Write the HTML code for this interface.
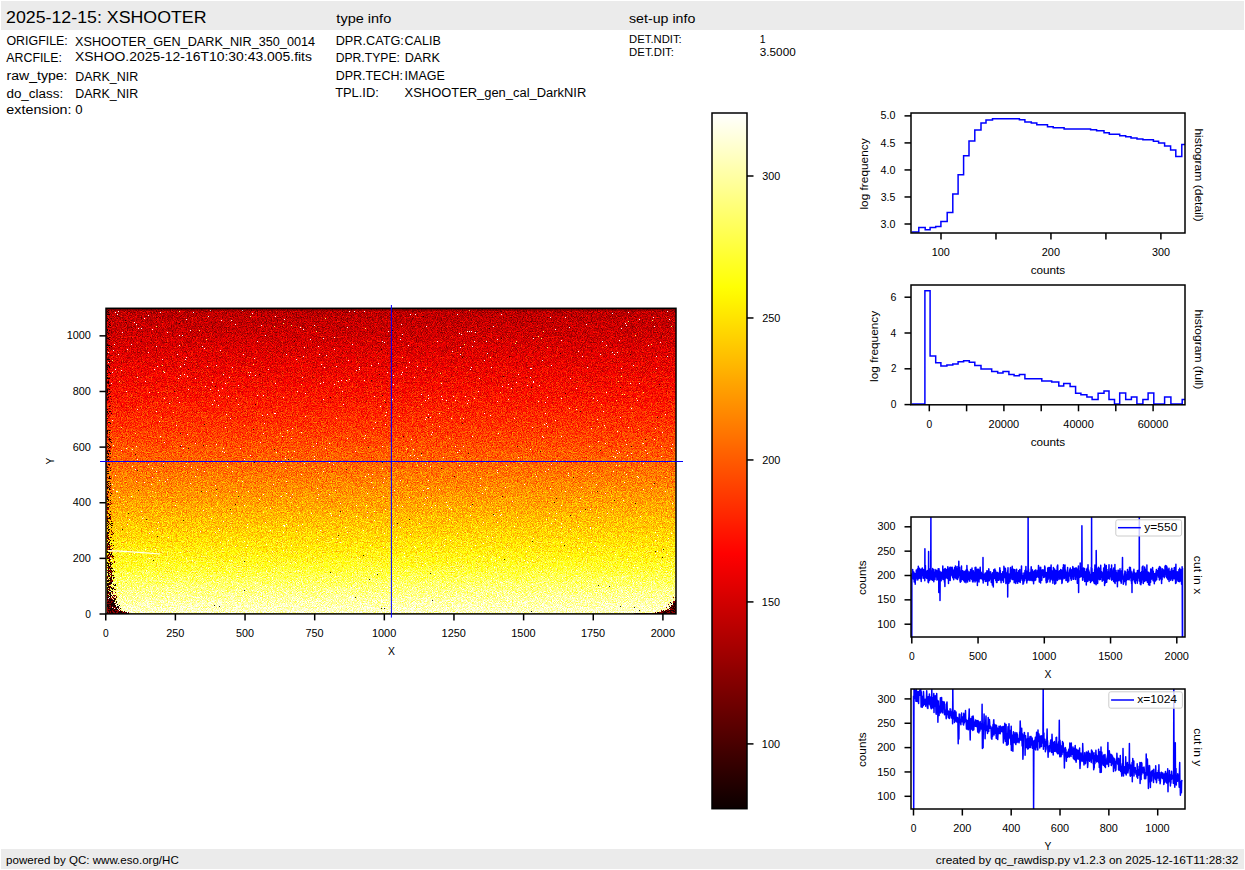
<!DOCTYPE html>
<html><head><meta charset="utf-8"><title>XSHOOTER raw display</title>
<style>html,body{margin:0;padding:0;background:#fff;width:1245px;height:870px;overflow:hidden}</style>
</head><body>
<svg width="1245" height="870" viewBox="0 0 1245 870" font-family='"Liberation Sans", sans-serif' style="display:block"><rect x="1" y="1" width="1243" height="29" fill="#ebebeb"/>
<rect x="1" y="849" width="1243" height="20" fill="#ebebeb"/>
<text x="6.01" y="23" font-size="16.67" textLength="200.52" lengthAdjust="spacingAndGlyphs" fill="#000">2025-12-15: XSHOOTER</text>
<text x="336.38" y="22.8" font-size="12.5" textLength="54.83" lengthAdjust="spacingAndGlyphs" fill="#000">type info</text>
<text x="629" y="22.6" font-size="12.5" textLength="66.29" lengthAdjust="spacingAndGlyphs" fill="#000">set-up info</text>
<text x="6.41" y="44.9" font-size="12.5" textLength="61.41" lengthAdjust="spacingAndGlyphs" fill="#000">ORIGFILE:</text>
<text x="75.09" y="45.6" font-size="12.5" textLength="240.01" lengthAdjust="spacingAndGlyphs" fill="#000">XSHOOTER_GEN_DARK_NIR_350_0014</text>
<text x="6.37" y="61.6" font-size="12.5" textLength="55.51" lengthAdjust="spacingAndGlyphs" fill="#000">ARCFILE:</text>
<text x="75.06" y="61.4" font-size="12.5" textLength="236.89" lengthAdjust="spacingAndGlyphs" fill="#000">XSHOO.2025-12-16T10:30:43.005.fits</text>
<text x="6.5" y="80.3" font-size="12.5" textLength="61.03" lengthAdjust="spacingAndGlyphs" fill="#000">raw_type:</text>
<text x="75.2" y="80.5" font-size="12.5" textLength="63.05" lengthAdjust="spacingAndGlyphs" fill="#000">DARK_NIR</text>
<text x="6.43" y="97.5" font-size="12.5" textLength="56.72" lengthAdjust="spacingAndGlyphs" fill="#000">do_class:</text>
<text x="75.2" y="97.6" font-size="12.5" textLength="63.05" lengthAdjust="spacingAndGlyphs" fill="#000">DARK_NIR</text>
<text x="6.38" y="113.6" font-size="12.5" textLength="65.13" lengthAdjust="spacingAndGlyphs" fill="#000">extension:</text>
<text x="75.31" y="113.8" font-size="12.5" textLength="7.33" lengthAdjust="spacingAndGlyphs" fill="#000">0</text>
<text x="335.7" y="44.8" font-size="12.5" textLength="68.12" lengthAdjust="spacingAndGlyphs" fill="#000">DPR.CATG:</text>
<text x="404.57" y="44.8" font-size="12.5" textLength="36.22" lengthAdjust="spacingAndGlyphs" fill="#000">CALIB</text>
<text x="335.73" y="61.5" font-size="12.5" textLength="64.16" lengthAdjust="spacingAndGlyphs" fill="#000">DPR.TYPE:</text>
<text x="404.69" y="61.5" font-size="12.5" textLength="35.28" lengthAdjust="spacingAndGlyphs" fill="#000">DARK</text>
<text x="335.7" y="80" font-size="12.5" textLength="67.17" lengthAdjust="spacingAndGlyphs" fill="#000">DPR.TECH:</text>
<text x="404.57" y="80" font-size="12.5" textLength="40.27" lengthAdjust="spacingAndGlyphs" fill="#000">IMAGE</text>
<text x="335.17" y="96.8" font-size="12.5" textLength="43.68" lengthAdjust="spacingAndGlyphs" fill="#000">TPL.ID:</text>
<text x="404.58" y="96.8" font-size="12.5" textLength="181.64" lengthAdjust="spacingAndGlyphs" fill="#000">XSHOOTER_gen_cal_DarkNIR</text>
<text x="629.14" y="42.8" font-size="10.4" textLength="52.58" lengthAdjust="spacingAndGlyphs" fill="#000">DET.NDIT:</text>
<text x="759.85" y="42.8" font-size="10.4" textLength="5.82" lengthAdjust="spacingAndGlyphs" fill="#000">1</text>
<text x="629.14" y="55.7" font-size="10.4" textLength="44.8" lengthAdjust="spacingAndGlyphs" fill="#000">DET.DIT:</text>
<text x="759.85" y="55.7" font-size="10.4" textLength="35.81" lengthAdjust="spacingAndGlyphs" fill="#000">3.5000</text>
<text x="6.06" y="863.8" font-size="10.4" textLength="172.68" lengthAdjust="spacingAndGlyphs" fill="#000">powered by QC: www.eso.org/HC</text>
<text x="935.8" y="863.8" font-size="10.4" textLength="302.6" lengthAdjust="spacingAndGlyphs" fill="#000">created by qc_rawdisp.py v1.2.3 on 2025-12-16T11:28:32</text>
<defs>
<linearGradient id="imgrad" x1="0" y1="0" x2="0" y2="1"><stop offset="0.0000" stop-color="#424242"/><stop offset="0.0167" stop-color="#434343"/><stop offset="0.0333" stop-color="#454545"/><stop offset="0.0500" stop-color="#474747"/><stop offset="0.0667" stop-color="#484848"/><stop offset="0.0833" stop-color="#4a4a4a"/><stop offset="0.1000" stop-color="#4c4c4c"/><stop offset="0.1167" stop-color="#4e4e4e"/><stop offset="0.1333" stop-color="#505050"/><stop offset="0.1500" stop-color="#525252"/><stop offset="0.1667" stop-color="#545454"/><stop offset="0.1833" stop-color="#565656"/><stop offset="0.2000" stop-color="#585858"/><stop offset="0.2167" stop-color="#5a5a5a"/><stop offset="0.2333" stop-color="#5c5c5c"/><stop offset="0.2500" stop-color="#5e5e5e"/><stop offset="0.2667" stop-color="#606060"/><stop offset="0.2833" stop-color="#626262"/><stop offset="0.3000" stop-color="#646464"/><stop offset="0.3167" stop-color="#676767"/><stop offset="0.3333" stop-color="#696969"/><stop offset="0.3500" stop-color="#6c6c6c"/><stop offset="0.3667" stop-color="#6e6e6e"/><stop offset="0.3833" stop-color="#707070"/><stop offset="0.4000" stop-color="#737373"/><stop offset="0.4167" stop-color="#767676"/><stop offset="0.4333" stop-color="#787878"/><stop offset="0.4500" stop-color="#7b7b7b"/><stop offset="0.4667" stop-color="#7e7e7e"/><stop offset="0.4833" stop-color="#808080"/><stop offset="0.5000" stop-color="#838383"/><stop offset="0.5167" stop-color="#868686"/><stop offset="0.5333" stop-color="#898989"/><stop offset="0.5500" stop-color="#8c8c8c"/><stop offset="0.5667" stop-color="#8f8f8f"/><stop offset="0.5833" stop-color="#929292"/><stop offset="0.6000" stop-color="#959595"/><stop offset="0.6167" stop-color="#989898"/><stop offset="0.6333" stop-color="#9b9b9b"/><stop offset="0.6500" stop-color="#9e9e9e"/><stop offset="0.6667" stop-color="#a1a1a1"/><stop offset="0.6833" stop-color="#a5a5a5"/><stop offset="0.7000" stop-color="#a8a8a8"/><stop offset="0.7167" stop-color="#ababab"/><stop offset="0.7333" stop-color="#afafaf"/><stop offset="0.7500" stop-color="#b2b2b2"/><stop offset="0.7667" stop-color="#b6b6b6"/><stop offset="0.7833" stop-color="#b9b9b9"/><stop offset="0.8000" stop-color="#bdbdbd"/><stop offset="0.8167" stop-color="#c1c1c1"/><stop offset="0.8333" stop-color="#c6c6c6"/><stop offset="0.8500" stop-color="#cacaca"/><stop offset="0.8667" stop-color="#d0d0d0"/><stop offset="0.8833" stop-color="#d5d5d5"/><stop offset="0.9000" stop-color="#dadada"/><stop offset="0.9167" stop-color="#dfdfdf"/><stop offset="0.9333" stop-color="#e3e3e3"/><stop offset="0.9500" stop-color="#e8e8e8"/><stop offset="0.9667" stop-color="#ececec"/><stop offset="0.9833" stop-color="#f0f0f0"/><stop offset="1.0000" stop-color="#f4f4f4"/></linearGradient>
<filter id="hotnoise" x="0" y="0" width="1" height="1" color-interpolation-filters="sRGB"><feTurbulence type="fractalNoise" baseFrequency="1.2" numOctaves="1" seed="11" result="n0"/><feColorMatrix in="n0" type="matrix" values="1 0 0 0 0 0 1 0 0 0 0 0 1 0 0 0 0 0 0 1" result="n"/><feComposite in="SourceGraphic" in2="n" operator="arithmetic" k1="0" k2="1" k3="0.53" k4="-0.265" result="v"/><feColorMatrix in="v" type="matrix" values="1 0 0 0 0 1 0 0 0 0 1 0 0 0 0 0 0 0 0 1" result="v3"/><feComponentTransfer in="v3"><feFuncR type="table" tableValues="0.043 0.082 0.125 0.165 0.208 0.251 0.290 0.333 0.376 0.416 0.459 0.498 0.541 0.584 0.624 0.667 0.710 0.749 0.792 0.831 0.875 0.918 0.957 1.000 1.000 1.000 1.000 1.000 1.000 1.000 1.000 1.000 1.000 1.000 1.000 1.000 1.000 1.000 1.000 1.000 1.000 1.000 1.000 1.000 1.000 1.000 1.000 1.000 1.000 1.000 1.000 1.000 1.000 1.000 1.000 1.000 1.000 1.000 1.000 1.000 1.000 1.000 1.000 1.000"/><feFuncG type="table" tableValues="0.000 0.000 0.000 0.000 0.000 0.000 0.000 0.000 0.000 0.000 0.000 0.000 0.000 0.000 0.000 0.000 0.000 0.000 0.000 0.000 0.000 0.000 0.000 0.000 0.043 0.082 0.125 0.169 0.208 0.251 0.290 0.333 0.376 0.416 0.459 0.502 0.541 0.584 0.624 0.667 0.710 0.749 0.792 0.831 0.875 0.918 0.957 1.000 1.000 1.000 1.000 1.000 1.000 1.000 1.000 1.000 1.000 1.000 1.000 1.000 1.000 1.000 1.000 1.000"/><feFuncB type="table" tableValues="0.000 0.000 0.000 0.000 0.000 0.000 0.000 0.000 0.000 0.000 0.000 0.000 0.000 0.000 0.000 0.000 0.000 0.000 0.000 0.000 0.000 0.000 0.000 0.000 0.000 0.000 0.000 0.000 0.000 0.000 0.000 0.000 0.000 0.000 0.000 0.000 0.000 0.000 0.000 0.000 0.000 0.000 0.000 0.000 0.000 0.000 0.000 0.000 0.063 0.125 0.188 0.251 0.314 0.376 0.439 0.498 0.561 0.624 0.686 0.749 0.812 0.875 0.937 1.000"/></feComponentTransfer></filter>
<linearGradient id="cbgrad" x1="0" y1="0" x2="0" y2="1"><stop offset="0.0000" stop-color="#ffffff"/><stop offset="0.0167" stop-color="#ffffee"/><stop offset="0.0333" stop-color="#ffffde"/><stop offset="0.0500" stop-color="#ffffcd"/><stop offset="0.0667" stop-color="#ffffbc"/><stop offset="0.0833" stop-color="#ffffab"/><stop offset="0.1000" stop-color="#ffff9b"/><stop offset="0.1167" stop-color="#ffff8a"/><stop offset="0.1333" stop-color="#ffff79"/><stop offset="0.1500" stop-color="#ffff68"/><stop offset="0.1667" stop-color="#ffff58"/><stop offset="0.1833" stop-color="#ffff47"/><stop offset="0.2000" stop-color="#ffff36"/><stop offset="0.2167" stop-color="#ffff25"/><stop offset="0.2333" stop-color="#ffff15"/><stop offset="0.2500" stop-color="#ffff04"/><stop offset="0.2667" stop-color="#fff600"/><stop offset="0.2833" stop-color="#ffeb00"/><stop offset="0.3000" stop-color="#ffe000"/><stop offset="0.3167" stop-color="#ffd500"/><stop offset="0.3333" stop-color="#ffca00"/><stop offset="0.3500" stop-color="#ffbf00"/><stop offset="0.3667" stop-color="#ffb400"/><stop offset="0.3833" stop-color="#ffa800"/><stop offset="0.4000" stop-color="#ff9d00"/><stop offset="0.4167" stop-color="#ff9200"/><stop offset="0.4333" stop-color="#ff8700"/><stop offset="0.4500" stop-color="#ff7c00"/><stop offset="0.4667" stop-color="#ff7100"/><stop offset="0.4833" stop-color="#ff6500"/><stop offset="0.5000" stop-color="#ff5a00"/><stop offset="0.5167" stop-color="#ff4f00"/><stop offset="0.5333" stop-color="#ff4400"/><stop offset="0.5500" stop-color="#ff3900"/><stop offset="0.5667" stop-color="#ff2e00"/><stop offset="0.5833" stop-color="#ff2300"/><stop offset="0.6000" stop-color="#ff1700"/><stop offset="0.6167" stop-color="#ff0c00"/><stop offset="0.6333" stop-color="#ff0100"/><stop offset="0.6500" stop-color="#f50000"/><stop offset="0.6667" stop-color="#ea0000"/><stop offset="0.6833" stop-color="#df0000"/><stop offset="0.7000" stop-color="#d30000"/><stop offset="0.7167" stop-color="#c80000"/><stop offset="0.7333" stop-color="#bd0000"/><stop offset="0.7500" stop-color="#b20000"/><stop offset="0.7667" stop-color="#a70000"/><stop offset="0.7833" stop-color="#9c0000"/><stop offset="0.8000" stop-color="#900000"/><stop offset="0.8167" stop-color="#850000"/><stop offset="0.8333" stop-color="#7a0000"/><stop offset="0.8500" stop-color="#6f0000"/><stop offset="0.8667" stop-color="#640000"/><stop offset="0.8833" stop-color="#590000"/><stop offset="0.9000" stop-color="#4e0000"/><stop offset="0.9167" stop-color="#420000"/><stop offset="0.9333" stop-color="#370000"/><stop offset="0.9500" stop-color="#2c0000"/><stop offset="0.9667" stop-color="#210000"/><stop offset="0.9833" stop-color="#160000"/><stop offset="1.0000" stop-color="#0b0000"/></linearGradient>
</defs>
<rect x="106.0" y="308.3" width="570.0" height="305.59999999999997" fill="url(#imgrad)" filter="url(#hotnoise)"/>
<path d="M244 541h1v1h-1zM491 367h1v1h-1zM160 436h1v1h-1zM229 560h1v1h-1zM288 596h1v1h-1zM283 532h1v1h-1zM623 500h1v1h-1zM561 523h1v1h-1zM626 474h1v1h-1zM672 503h1v1h-1zM152 531h1v1h-1zM188 578h1v1h-1zM600 354h1v1h-1zM152 468h1v1h-1zM202 346h1v1h-1zM210 389h1v1h-1zM626 325h1v1h-1zM311 513h1v1h-1zM257 341h1v1h-1zM204 348h1v1h-1zM367 493h1v1h-1zM441 396h1v1h-1zM561 398h1v1h-1zM457 314h1v1h-1zM667 311h1v1h-1zM167 588h1v1h-1zM384 478h1v1h-1zM428 395h1v1h-1zM497 596h1v1h-1zM110 558h1v1h-1zM222 451h1v1h-1zM371 569h1v1h-1zM145 381h1v1h-1zM661 456h1v1h-1zM471 367h1v1h-1zM561 527h1v1h-1zM400 480h1v1h-1zM446 400h1v1h-1zM303 356h1v1h-1zM292 428h1v1h-1zM181 445h1v1h-1zM224 572h1v1h-1zM542 436h1v1h-1zM359 588h1v1h-1zM576 388h1v1h-1zM265 335h1v1h-1zM516 382h1v1h-1zM604 545h1v1h-1zM578 538h1v1h-1zM228 540h1v1h-1zM316 443h1v1h-1zM263 433h1v1h-1zM561 542h1v1h-1zM565 317h1v1h-1zM359 558h1v1h-1zM260 442h1v1h-1zM144 482h1v1h-1zM259 499h1v1h-1zM193 312h1v1h-1zM148 352h1v1h-1zM551 464h1v1h-1zM372 474h1v1h-1zM657 551h1v1h-1zM257 573h1v1h-1zM326 355h1v1h-1zM612 352h1v1h-1zM457 452h1v1h-1zM270 508h1v1h-1zM318 494h1v1h-1zM546 423h1v1h-1zM314 456h1v1h-1zM384 533h1v1h-1zM385 415h1v1h-1zM373 487h1v1h-1zM384 342h1v1h-1zM655 428h1v1h-1zM244 505h1v1h-1zM617 453h1v1h-1zM218 390h1v1h-1zM152 329h1v1h-1zM287 430h1v1h-1zM247 527h1v1h-1zM470 369h1v1h-1zM212 404h1v1h-1zM223 374h1v1h-1zM621 590h1v1h-1zM568 473h1v1h-1zM422 565h1v1h-1zM626 444h1v1h-1zM318 346h1v1h-1zM148 464h1v1h-1zM580 591h1v1h-1zM158 522h1v1h-1zM305 416h1v1h-1zM367 512h1v1h-1zM494 515h1v1h-1zM178 378h1v1h-1zM237 576h1v1h-1zM156 471h1v1h-1zM121 370h1v1h-1zM211 518h1v1h-1zM502 386h1v1h-1zM415 314h1v1h-1zM298 570h1v1h-1zM497 339h1v1h-1zM301 474h1v1h-1zM669 319h1v1h-1zM264 423h1v1h-1zM493 578h1v1h-1zM250 455h1v1h-1zM431 434h1v1h-1zM431 507h1v1h-1zM628 312h1v1h-1zM297 391h1v1h-1zM169 403h1v1h-1zM349 311h1v1h-1zM452 351h1v1h-1zM222 388h1v1h-1zM672 444h1v1h-1zM394 568h1v1h-1zM388 331h1v1h-1zM439 413h1v1h-1zM425 419h1v1h-1zM346 380h1v1h-1zM421 543h1v1h-1zM336 418h1v1h-1zM671 569h1v1h-1zM643 463h1v1h-1zM417 366h1v1h-1zM135 592h1v1h-1zM302 377h1v1h-1zM292 494h1v1h-1zM484 360h1v1h-1zM402 334h1v1h-1zM179 402h1v1h-1zM447 562h1v1h-1zM115 475h1v1h-1zM131 496h1v1h-1zM116 491h1v1h-1zM244 459h1v1h-1zM638 477h1v1h-1zM138 328h1v1h-1zM449 519h1v1h-1zM112 372h1v1h-1zM136 481h1v1h-1zM290 497h1v1h-1zM200 531h1v1h-1zM338 381h1v1h-1zM137 459h1v1h-1zM595 546h1v1h-1zM364 311h1v1h-1zM115 369h1v1h-1zM108 362h1v1h-1zM514 526h1v1h-1zM313 588h1v1h-1zM367 517h1v1h-1zM491 578h1v1h-1zM442 399h1v1h-1zM492 537h1v1h-1zM191 467h1v1h-1zM541 571h1v1h-1zM562 578h1v1h-1zM421 551h1v1h-1zM323 382h1v1h-1zM273 597h1v1h-1zM340 542h1v1h-1zM549 513h1v1h-1zM428 480h1v1h-1zM215 485h1v1h-1zM255 375h1v1h-1zM216 365h1v1h-1zM355 451h1v1h-1zM272 577h1v1h-1zM184 364h1v1h-1zM474 398h1v1h-1zM506 465h1v1h-1zM298 525h1v1h-1zM165 481h1v1h-1zM337 538h1v1h-1zM266 544h1v1h-1zM324 367h1v1h-1zM231 513h1v1h-1zM126 448h1v1h-1zM182 335h1v1h-1zM589 446h1v1h-1zM419 523h1v1h-1zM415 547h1v1h-1zM219 395h1v1h-1zM495 560h1v1h-1zM533 382h1v1h-1zM637 476h1v1h-1zM266 571h1v1h-1zM114 344h1v1h-1zM656 578h1v1h-1zM613 456h1v1h-1zM428 398h1v1h-1zM671 448h1v1h-1zM157 366h1v1h-1zM425 498h1v1h-1zM459 450h1v1h-1zM229 592h1v1h-1zM226 414h1v1h-1zM414 377h1v1h-1zM322 592h1v1h-1zM401 374h1v1h-1zM225 383h1v1h-1zM356 516h1v1h-1zM269 561h1v1h-1zM409 594h1v1h-1zM455 446h1v1h-1zM386 412h1v1h-1zM394 490h1v1h-1zM257 555h1v1h-1zM119 583h1v1h-1zM487 353h1v1h-1zM627 455h1v1h-1zM450 540h1v1h-1zM247 524h1v1h-1zM359 369h1v1h-1zM383 547h1v1h-1zM347 438h1v1h-1zM180 552h1v1h-1zM590 509h1v1h-1zM325 448h1v1h-1zM113 350h1v1h-1zM551 523h1v1h-1zM117 491h1v1h-1zM243 354h1v1h-1zM323 471h1v1h-1zM586 324h1v1h-1zM511 388h1v1h-1zM456 569h1v1h-1zM374 574h1v1h-1zM467 331h1v1h-1zM605 443h1v1h-1zM621 328h1v1h-1zM536 476h1v1h-1zM396 537h1v1h-1zM232 471h1v1h-1zM186 357h1v1h-1zM317 539h1v1h-1zM471 331h1v1h-1zM214 400h1v1h-1zM467 403h1v1h-1zM576 575h1v1h-1zM561 505h1v1h-1zM307 546h1v1h-1zM179 345h1v1h-1zM613 471h1v1h-1zM231 560h1v1h-1zM478 391h1v1h-1zM636 591h1v1h-1zM643 443h1v1h-1zM427 497h1v1h-1zM336 366h1v1h-1zM223 521h1v1h-1zM532 427h1v1h-1zM348 360h1v1h-1zM286 493h1v1h-1zM329 494h1v1h-1zM187 376h1v1h-1zM181 592h1v1h-1zM321 364h1v1h-1zM443 578h1v1h-1zM313 446h1v1h-1zM137 409h1v1h-1zM285 468h1v1h-1zM141 511h1v1h-1zM156 346h1v1h-1zM254 358h1v1h-1zM439 426h1v1h-1zM317 488h1v1h-1zM148 315h1v1h-1zM427 488h1v1h-1zM628 427h1v1h-1zM621 368h1v1h-1zM612 313h1v1h-1zM238 404h1v1h-1zM578 351h1v1h-1zM192 560h1v1h-1zM283 566h1v1h-1zM184 374h1v1h-1zM556 460h1v1h-1zM149 392h1v1h-1zM410 455h1v1h-1zM195 443h1v1h-1zM633 567h1v1h-1zM232 367h1v1h-1zM371 482h1v1h-1zM645 450h1v1h-1zM406 367h1v1h-1zM603 411h1v1h-1zM655 532h1v1h-1zM187 434h1v1h-1zM480 485h1v1h-1zM550 488h1v1h-1zM593 398h1v1h-1zM111 560h1v1h-1zM633 583h1v1h-1zM484 413h1v1h-1zM261 325h1v1h-1zM285 458h1v1h-1zM265 522h1v1h-1zM310 339h1v1h-1zM656 368h1v1h-1zM235 546h1v1h-1zM227 466h1v1h-1zM426 417h1v1h-1zM503 567h1v1h-1zM635 593h1v1h-1zM555 420h1v1h-1zM578 526h1v1h-1zM284 526h1v1h-1zM570 529h1v1h-1zM486 341h1v1h-1zM397 505h1v1h-1zM527 562h1v1h-1zM660 342h1v1h-1zM550 589h1v1h-1zM583 551h1v1h-1zM596 484h1v1h-1zM463 446h1v1h-1zM249 375h1v1h-1zM612 509h1v1h-1zM547 397h1v1h-1zM157 528h1v1h-1zM122 332h1v1h-1zM231 320h1v1h-1zM380 406h1v1h-1zM622 577h1v1h-1zM543 437h1v1h-1zM210 310h1v1h-1zM463 589h1v1h-1zM155 549h1v1h-1zM134 553h1v1h-1zM329 462h1v1h-1zM382 341h1v1h-1zM514 418h1v1h-1zM160 312h1v1h-1zM445 539h1v1h-1zM471 590h1v1h-1zM409 497h1v1h-1zM111 383h1v1h-1zM529 546h1v1h-1zM167 479h1v1h-1zM580 498h1v1h-1zM497 522h1v1h-1zM119 497h1v1h-1zM371 365h1v1h-1zM616 450h1v1h-1zM128 577h1v1h-1zM449 508h1v1h-1zM145 549h1v1h-1zM605 493h1v1h-1zM218 528h1v1h-1zM385 424h1v1h-1zM451 509h1v1h-1zM296 531h1v1h-1zM276 462h1v1h-1zM183 448h1v1h-1zM632 581h1v1h-1zM526 551h1v1h-1zM286 481h1v1h-1zM175 505h1v1h-1zM383 482h1v1h-1zM580 577h1v1h-1zM581 487h1v1h-1zM208 568h1v1h-1zM497 470h1v1h-1zM147 587h1v1h-1zM363 530h1v1h-1zM490 415h1v1h-1zM163 463h1v1h-1zM400 527h1v1h-1zM229 377h1v1h-1zM210 592h1v1h-1zM551 365h1v1h-1zM129 554h1v1h-1zM546 519h1v1h-1zM268 369h1v1h-1zM530 449h1v1h-1zM599 461h1v1h-1zM660 568h1v1h-1zM320 383h1v1h-1zM654 439h1v1h-1zM545 471h1v1h-1zM617 582h1v1h-1zM667 554h1v1h-1zM637 400h1v1h-1zM568 556h1v1h-1zM319 354h1v1h-1zM667 356h1v1h-1zM609 593h1v1h-1zM383 496h1v1h-1zM162 359h1v1h-1zM647 453h1v1h-1zM485 489h1v1h-1zM218 405h1v1h-1zM215 532h1v1h-1zM216 495h1v1h-1zM352 344h1v1h-1zM501 514h1v1h-1zM235 324h1v1h-1zM656 356h1v1h-1zM118 311h1v1h-1zM471 548h1v1h-1zM483 522h1v1h-1zM432 432h1v1h-1zM532 584h1v1h-1zM598 517h1v1h-1zM373 428h1v1h-1zM263 395h1v1h-1zM334 384h1v1h-1zM607 513h1v1h-1zM532 560h1v1h-1zM141 328h1v1h-1zM615 554h1v1h-1zM229 571h1v1h-1zM284 525h1v1h-1zM568 475h1v1h-1zM461 334h1v1h-1zM425 563h1v1h-1zM168 537h1v1h-1zM582 356h1v1h-1zM366 505h1v1h-1zM323 399h1v1h-1zM482 493h1v1h-1zM127 524h1v1h-1zM354 311h1v1h-1zM437 341h1v1h-1zM460 347h1v1h-1zM475 545h1v1h-1zM356 505h1v1h-1zM176 425h1v1h-1zM223 448h1v1h-1zM455 400h1v1h-1zM173 598h1v1h-1zM531 368h1v1h-1zM472 346h1v1h-1zM653 317h1v1h-1zM132 466h1v1h-1zM483 543h1v1h-1zM207 366h1v1h-1zM434 574h1v1h-1zM592 473h1v1h-1zM476 464h1v1h-1zM570 378h1v1h-1zM331 515h1v1h-1zM374 396h1v1h-1zM414 546h1v1h-1zM295 562h1v1h-1zM359 367h1v1h-1zM252 313h1v1h-1zM421 455h1v1h-1zM597 400h1v1h-1zM472 436h1v1h-1zM374 520h1v1h-1zM479 378h1v1h-1zM203 581h1v1h-1zM587 367h1v1h-1zM334 337h1v1h-1zM203 510h1v1h-1zM294 451h1v1h-1zM236 491h1v1h-1zM341 380h1v1h-1zM291 545h1v1h-1zM344 590h1v1h-1zM637 567h1v1h-1zM555 519h1v1h-1zM474 341h1v1h-1zM598 441h1v1h-1zM179 594h1v1h-1zM524 484h1v1h-1zM283 550h1v1h-1zM539 385h1v1h-1zM505 487h1v1h-1zM616 465h1v1h-1zM221 320h1v1h-1zM206 491h1v1h-1zM533 538h1v1h-1zM662 432h1v1h-1zM639 383h1v1h-1zM597 419h1v1h-1zM634 565h1v1h-1zM131 344h1v1h-1zM385 509h1v1h-1zM246 590h1v1h-1zM301 432h1v1h-1zM497 472h1v1h-1zM208 316h1v1h-1zM554 558h1v1h-1zM190 483h1v1h-1zM247 545h1v1h-1zM142 518h1v1h-1zM330 513h1v1h-1zM576 570h1v1h-1zM159 480h1v1h-1zM300 327h1v1h-1zM591 542h1v1h-1zM248 491h1v1h-1zM283 525h1v1h-1zM606 345h1v1h-1zM631 453h1v1h-1zM186 558h1v1h-1zM144 318h1v1h-1zM185 359h1v1h-1zM648 345h1v1h-1zM256 461h1v1h-1zM121 450h1v1h-1zM580 511h1v1h-1zM242 310h1v1h-1zM177 354h1v1h-1zM480 478h1v1h-1zM222 548h1v1h-1zM576 409h1v1h-1zM633 365h1v1h-1zM281 462h1v1h-1zM604 425h1v1h-1zM538 401h1v1h-1zM501 314h1v1h-1zM393 384h1v1h-1zM188 389h1v1h-1zM405 570h1v1h-1zM512 501h1v1h-1zM291 438h1v1h-1zM671 533h1v1h-1zM329 443h1v1h-1zM499 510h1v1h-1zM360 461h1v1h-1zM414 455h1v1h-1zM286 524h1v1h-1zM519 461h1v1h-1zM518 374h1v1h-1zM617 352h1v1h-1zM451 418h1v1h-1zM345 527h1v1h-1zM347 327h1v1h-1zM508 384h1v1h-1zM381 570h1v1h-1zM459 465h1v1h-1zM220 542h1v1h-1zM453 396h1v1h-1zM393 525h1v1h-1zM374 511h1v1h-1zM624 482h1v1h-1zM323 338h1v1h-1zM430 466h1v1h-1zM112 420h1v1h-1zM541 576h1v1h-1zM569 327h1v1h-1zM640 516h1v1h-1zM402 372h1v1h-1zM441 383h1v1h-1zM465 396h1v1h-1zM318 590h1v1h-1zM263 494h1v1h-1zM225 427h1v1h-1zM408 345h1v1h-1zM533 381h1v1h-1zM127 573h1v1h-1zM149 533h1v1h-1zM382 446h1v1h-1zM193 591h1v1h-1zM404 553h1v1h-1zM428 488h1v1h-1zM274 568h1v1h-1zM422 461h1v1h-1zM262 415h1v1h-1zM470 515h1v1h-1zM459 333h1v1h-1zM187 589h1v1h-1zM164 398h1v1h-1zM335 490h1v1h-1zM179 335h1v1h-1zM317 498h1v1h-1zM213 581h1v1h-1zM579 548h1v1h-1zM302 524h1v1h-1zM219 530h1v1h-1zM657 535h1v1h-1zM640 582h1v1h-1zM590 528h1v1h-1zM275 316h1v1h-1zM356 370h1v1h-1zM497 401h1v1h-1zM499 557h1v1h-1zM195 476h1v1h-1zM339 515h1v1h-1zM276 452h1v1h-1zM548 469h1v1h-1zM270 530h1v1h-1zM504 593h1v1h-1zM117 314h1v1h-1zM114 569h1v1h-1zM425 464h1v1h-1zM446 502h1v1h-1zM493 326h1v1h-1zM255 583h1v1h-1zM202 578h1v1h-1zM631 408h1v1h-1zM204 471h1v1h-1zM460 354h1v1h-1zM421 394h1v1h-1zM619 452h1v1h-1zM375 422h1v1h-1zM569 408h1v1h-1zM668 538h1v1h-1zM342 391h1v1h-1zM113 445h1v1h-1zM615 457h1v1h-1zM423 490h1v1h-1zM665 414h1v1h-1zM135 469h1v1h-1zM238 385h1v1h-1zM630 383h1v1h-1zM351 587h1v1h-1zM365 435h1v1h-1zM154 369h1v1h-1zM619 340h1v1h-1zM391 575h1v1h-1zM443 457h1v1h-1zM364 380h1v1h-1zM475 332h1v1h-1zM382 468h1v1h-1zM115 312h1v1h-1zM184 466h1v1h-1zM250 372h1v1h-1zM397 578h1v1h-1zM282 436h1v1h-1zM320 530h1v1h-1zM267 414h1v1h-1zM350 597h1v1h-1zM524 577h1v1h-1zM542 360h1v1h-1zM491 559h1v1h-1zM393 375h1v1h-1zM135 575h1v1h-1zM120 577h1v1h-1zM530 368h1v1h-1zM335 576h1v1h-1zM617 431h1v1h-1zM614 354h1v1h-1zM468 400h1v1h-1zM275 383h1v1h-1zM368 474h1v1h-1zM195 378h1v1h-1zM410 314h1v1h-1zM112 484h1v1h-1zM168 563h1v1h-1zM430 417h1v1h-1zM457 533h1v1h-1zM230 418h1v1h-1zM602 341h1v1h-1zM295 571h1v1h-1zM273 484h1v1h-1zM550 317h1v1h-1zM483 556h1v1h-1zM612 599h1v1h-1zM533 338h1v1h-1zM240 448h1v1h-1zM370 545h1v1h-1zM216 444h1v1h-1zM296 359h1v1h-1zM272 551h1v1h-1zM620 417h1v1h-1zM651 488h1v1h-1zM565 491h1v1h-1zM113 489h1v1h-1zM365 476h1v1h-1zM528 573h1v1h-1zM551 531h1v1h-1zM643 489h1v1h-1zM561 436h1v1h-1zM304 347h1v1h-1zM498 433h1v1h-1zM212 382h1v1h-1zM260 585h1v1h-1zM589 471h1v1h-1zM494 567h1v1h-1zM197 469h1v1h-1zM555 329h1v1h-1zM518 457h1v1h-1zM108 598h1v1h-1zM654 326h1v1h-1zM228 396h1v1h-1zM314 325h1v1h-1zM550 567h1v1h-1zM159 421h1v1h-1zM224 452h1v1h-1zM404 556h1v1h-1zM126 391h1v1h-1zM527 385h1v1h-1zM411 439h1v1h-1zM387 372h1v1h-1zM545 413h1v1h-1zM314 459h1v1h-1zM332 538h1v1h-1zM347 532h1v1h-1zM447 505h1v1h-1zM508 399h1v1h-1zM190 330h1v1h-1zM246 547h1v1h-1zM417 458h1v1h-1zM400 339h1v1h-1zM186 319h1v1h-1zM180 375h1v1h-1zM334 349h1v1h-1zM524 560h1v1h-1zM133 587h1v1h-1zM500 515h1v1h-1zM137 377h1v1h-1zM205 386h1v1h-1zM425 400h1v1h-1zM242 481h1v1h-1zM164 372h1v1h-1zM283 397h1v1h-1zM425 369h1v1h-1zM290 563h1v1h-1zM410 534h1v1h-1zM284 319h1v1h-1zM303 329h1v1h-1zM547 426h1v1h-1zM146 570h1v1h-1zM127 579h1v1h-1zM275 413h1v1h-1zM220 350h1v1h-1zM639 319h1v1h-1zM479 556h1v1h-1zM606 392h1v1h-1zM206 597h1v1h-1zM167 332h1v1h-1zM591 428h1v1h-1zM286 354h1v1h-1zM556 513h1v1h-1zM136 446h1v1h-1zM561 340h1v1h-1zM428 414h1v1h-1zM469 331h1v1h-1zM134 322h1v1h-1zM132 449h1v1h-1zM152 477h1v1h-1zM654 583h1v1h-1zM254 598h1v1h-1zM180 366h1v1h-1zM468 583h1v1h-1zM127 349h1v1h-1zM108 352h1v1h-1zM401 324h1v1h-1zM125 598h1v1h-1zM627 559h1v1h-1zM443 592h1v1h-1zM298 582h1v1h-1zM413 449h1v1h-1zM548 579h1v1h-1zM265 585h1v1h-1zM378 363h1v1h-1zM110 578h1v1h-1zM156 411h1v1h-1zM238 583h1v1h-1zM470 506h1v1h-1zM655 540h1v1h-1zM655 553h1v1h-1zM151 484h1v1h-1zM500 582h1v1h-1zM257 395h1v1h-1zM487 536h1v1h-1zM281 496h1v1h-1zM444 545h1v1h-1zM322 578h1v1h-1zM164 442h1v1h-1zM409 362h1v1h-1zM340 503h1v1h-1zM424 504h1v1h-1zM227 463h1v1h-1zM392 399h1v1h-1zM439 489h1v1h-1zM544 424h1v1h-1zM402 506h1v1h-1zM545 402h1v1h-1zM136 324h1v1h-1zM343 404h1v1h-1zM364 438h1v1h-1zM333 464h1v1h-1zM530 377h1v1h-1zM274 413h1v1h-1zM305 393h1v1h-1zM435 505h1v1h-1zM463 418h1v1h-1zM661 446h1v1h-1zM304 463h1v1h-1zM590 527h1v1h-1zM149 558h1v1h-1zM625 323h1v1h-1zM177 571h1v1h-1zM665 491h1v1h-1zM118 354h1v1h-1zM426 326h1v1h-1zM129 519h1v1h-1zM517 517h1v1h-1zM498 595h1v1h-1z" fill="#ffffff"/>
<path d="M325 318h1v1h-1zM585 475h1v1h-1zM400 537h1v1h-1zM283 323h1v1h-1zM515 343h1v1h-1zM239 554h1v1h-1zM167 533h1v1h-1zM538 336h1v1h-1zM653 484h1v1h-1zM199 330h1v1h-1zM417 465h1v1h-1zM507 521h1v1h-1zM123 504h1v1h-1zM547 347h1v1h-1zM340 461h1v1h-1zM407 485h1v1h-1zM318 479h1v1h-1zM155 492h1v1h-1zM614 486h1v1h-1zM665 477h1v1h-1zM250 316h1v1h-1zM535 474h1v1h-1zM619 535h1v1h-1zM285 456h1v1h-1zM161 417h1v1h-1zM236 398h1v1h-1zM440 373h1v1h-1zM173 412h1v1h-1zM482 524h1v1h-1zM176 501h1v1h-1zM152 491h1v1h-1zM601 404h1v1h-1zM646 537h1v1h-1zM635 335h1v1h-1zM636 398h1v1h-1zM230 524h1v1h-1zM604 524h1v1h-1zM153 546h1v1h-1zM389 546h1v1h-1zM399 416h1v1h-1zM618 381h1v1h-1zM643 392h1v1h-1zM432 424h1v1h-1zM143 517h1v1h-1zM291 325h1v1h-1zM365 328h1v1h-1zM593 528h1v1h-1zM186 463h1v1h-1zM625 440h1v1h-1zM521 463h1v1h-1zM621 376h1v1h-1zM280 433h1v1h-1zM278 479h1v1h-1zM229 491h1v1h-1zM561 533h1v1h-1zM253 364h1v1h-1zM177 397h1v1h-1zM585 557h1v1h-1zM396 536h1v1h-1zM349 379h1v1h-1zM280 496h1v1h-1zM541 338h1v1h-1zM486 487h1v1h-1zM315 469h1v1h-1zM266 507h1v1h-1zM324 468h1v1h-1zM291 467h1v1h-1zM624 472h1v1h-1zM208 515h1v1h-1zM427 533h1v1h-1zM500 392h1v1h-1zM112 360h1v1h-1zM505 546h1v1h-1zM292 457h1v1h-1zM108 531h1v1h-1zM212 508h1v1h-1zM464 344h1v1h-1zM622 394h1v1h-1zM291 502h1v1h-1zM172 556h1v1h-1zM267 555h1v1h-1zM134 544h1v1h-1zM449 438h1v1h-1zM469 310h1v1h-1zM316 331h1v1h-1zM436 548h1v1h-1zM605 427h1v1h-1zM206 445h1v1h-1zM277 541h1v1h-1zM652 320h1v1h-1zM516 341h1v1h-1zM630 547h1v1h-1zM299 513h1v1h-1zM384 400h1v1h-1zM576 522h1v1h-1zM318 473h1v1h-1zM402 357h1v1h-1zM206 339h1v1h-1zM651 344h1v1h-1zM449 559h1v1h-1zM579 501h1v1h-1zM288 451h1v1h-1zM490 357h1v1h-1zM551 531h1v1h-1zM545 525h1v1h-1zM179 311h1v1h-1zM598 426h1v1h-1zM495 528h1v1h-1zM378 552h1v1h-1zM642 443h1v1h-1zM119 381h1v1h-1zM638 429h1v1h-1zM162 365h1v1h-1zM616 400h1v1h-1zM156 326h1v1h-1zM130 549h1v1h-1zM624 394h1v1h-1zM121 427h1v1h-1zM244 425h1v1h-1zM607 554h1v1h-1zM406 449h1v1h-1zM135 433h1v1h-1zM628 321h1v1h-1zM632 470h1v1h-1zM116 529h1v1h-1zM297 507h1v1h-1zM543 331h1v1h-1zM263 512h1v1h-1zM391 481h1v1h-1zM238 480h1v1h-1zM460 418h1v1h-1zM339 387h1v1h-1zM158 392h1v1h-1zM591 492h1v1h-1zM274 326h1v1h-1zM248 372h1v1h-1zM671 326h1v1h-1zM448 408h1v1h-1zM362 487h1v1h-1zM301 384h1v1h-1zM561 524h1v1h-1zM632 534h1v1h-1zM123 499h1v1h-1zM578 524h1v1h-1zM619 465h1v1h-1zM421 404h1v1h-1zM150 496h1v1h-1zM273 539h1v1h-1zM163 371h1v1h-1zM407 448h1v1h-1z" fill="#ffff60"/>
<path d="M509 356h1v1h-1zM409 519h1v1h-1zM462 423h1v1h-1zM146 519h1v1h-1zM598 585h1v1h-1zM355 597h1v1h-1zM489 328h1v1h-1zM540 451h1v1h-1zM382 395h1v1h-1zM600 450h1v1h-1zM244 590h1v1h-1zM180 446h1v1h-1zM330 572h1v1h-1zM532 541h1v1h-1zM382 462h1v1h-1zM609 586h1v1h-1zM634 607h1v1h-1zM573 477h1v1h-1zM384 608h1v1h-1zM128 513h1v1h-1zM153 560h1v1h-1zM454 476h1v1h-1zM560 353h1v1h-1zM255 404h1v1h-1zM570 515h1v1h-1zM472 504h1v1h-1zM580 411h1v1h-1zM501 338h1v1h-1zM369 579h1v1h-1zM244 561h1v1h-1zM423 316h1v1h-1zM111 591h1v1h-1zM216 489h1v1h-1zM503 376h1v1h-1zM179 323h1v1h-1zM564 545h1v1h-1zM174 391h1v1h-1zM122 529h1v1h-1zM657 417h1v1h-1zM381 349h1v1h-1zM138 490h1v1h-1zM259 374h1v1h-1zM253 429h1v1h-1zM288 459h1v1h-1zM188 369h1v1h-1zM368 447h1v1h-1zM238 496h1v1h-1zM502 496h1v1h-1zM659 384h1v1h-1zM620 387h1v1h-1zM531 387h1v1h-1zM504 559h1v1h-1zM531 611h1v1h-1zM421 453h1v1h-1zM385 402h1v1h-1zM381 608h1v1h-1zM392 330h1v1h-1zM556 498h1v1h-1zM397 523h1v1h-1zM663 549h1v1h-1zM219 606h1v1h-1zM662 557h1v1h-1zM631 446h1v1h-1zM441 468h1v1h-1zM204 424h1v1h-1zM183 520h1v1h-1zM214 605h1v1h-1zM274 449h1v1h-1zM554 502h1v1h-1zM654 483h1v1h-1zM203 445h1v1h-1zM135 454h1v1h-1zM614 500h1v1h-1zM254 462h1v1h-1zM620 606h1v1h-1zM493 514h1v1h-1zM517 446h1v1h-1zM430 573h1v1h-1zM230 509h1v1h-1zM294 341h1v1h-1zM462 357h1v1h-1zM371 380h1v1h-1zM635 503h1v1h-1zM428 417h1v1h-1zM338 535h1v1h-1zM655 551h1v1h-1zM180 433h1v1h-1zM379 374h1v1h-1zM188 448h1v1h-1zM163 466h1v1h-1zM330 397h1v1h-1zM235 504h1v1h-1zM468 453h1v1h-1zM585 509h1v1h-1zM137 470h1v1h-1zM630 354h1v1h-1zM340 511h1v1h-1zM215 386h1v1h-1zM363 555h1v1h-1zM125 320h1v1h-1zM403 436h1v1h-1zM639 610h1v1h-1zM432 600h1v1h-1zM157 536h1v1h-1zM597 491h1v1h-1zM346 469h1v1h-1zM565 393h1v1h-1zM377 574h1v1h-1zM201 491h1v1h-1zM645 439h1v1h-1z" fill="#000000" fill-opacity="0.85"/>
<path d="M108 310h1v1h-1zM107 311h1v1h-1zM108 312h1v1h-1zM107 314h1v1h-1zM108 314h1v1h-1zM109 314h1v1h-1zM107 318h1v1h-1zM108 319h1v1h-1zM107 320h1v1h-1zM109 322h1v1h-1zM109 324h1v1h-1zM110 325h1v1h-1zM108 326h1v1h-1zM107 329h1v1h-1zM107 330h1v1h-1zM109 330h1v1h-1zM107 332h1v1h-1zM108 333h1v1h-1zM109 337h1v1h-1zM107 338h1v1h-1zM108 338h1v1h-1zM109 339h1v1h-1zM107 344h1v1h-1zM107 345h1v1h-1zM108 345h1v1h-1zM109 345h1v1h-1zM111 346h1v1h-1zM107 347h1v1h-1zM109 347h1v1h-1zM107 349h1v1h-1zM107 353h1v1h-1zM107 359h1v1h-1zM108 359h1v1h-1zM109 359h1v1h-1zM109 361h1v1h-1zM107 365h1v1h-1zM108 365h1v1h-1zM109 366h1v1h-1zM107 367h1v1h-1zM109 367h1v1h-1zM107 369h1v1h-1zM109 372h1v1h-1zM107 373h1v1h-1zM110 373h1v1h-1zM107 375h1v1h-1zM107 377h1v1h-1zM107 378h1v1h-1zM108 378h1v1h-1zM109 378h1v1h-1zM108 381h1v1h-1zM107 382h1v1h-1zM108 382h1v1h-1zM108 383h1v1h-1zM109 385h1v1h-1zM107 389h1v1h-1zM109 389h1v1h-1zM107 390h1v1h-1zM107 391h1v1h-1zM107 392h1v1h-1zM109 393h1v1h-1zM107 394h1v1h-1zM110 396h1v1h-1zM108 397h1v1h-1zM107 399h1v1h-1zM109 406h1v1h-1zM107 409h1v1h-1zM107 411h1v1h-1zM109 411h1v1h-1zM110 411h1v1h-1zM107 412h1v1h-1zM108 413h1v1h-1zM111 413h1v1h-1zM107 418h1v1h-1zM108 422h1v1h-1zM109 422h1v1h-1zM110 423h1v1h-1zM107 430h1v1h-1zM109 430h1v1h-1zM107 431h1v1h-1zM109 432h1v1h-1zM107 433h1v1h-1zM109 438h1v1h-1zM109 439h1v1h-1zM110 439h1v1h-1zM110 441h1v1h-1zM111 442h1v1h-1zM107 443h1v1h-1zM108 444h1v1h-1zM109 445h1v1h-1zM108 446h1v1h-1zM109 447h1v1h-1zM109 450h1v1h-1zM107 451h1v1h-1zM109 451h1v1h-1zM107 453h1v1h-1zM108 453h1v1h-1zM110 453h1v1h-1zM108 454h1v1h-1zM108 456h1v1h-1zM107 457h1v1h-1zM107 459h1v1h-1zM108 459h1v1h-1zM108 460h1v1h-1zM108 464h1v1h-1zM109 464h1v1h-1zM107 467h1v1h-1zM110 470h1v1h-1zM107 471h1v1h-1zM108 471h1v1h-1zM107 473h1v1h-1zM108 473h1v1h-1zM109 476h1v1h-1zM109 477h1v1h-1zM109 478h1v1h-1zM110 478h1v1h-1zM108 481h1v1h-1zM107 482h1v1h-1zM108 483h1v1h-1zM110 483h1v1h-1zM107 484h1v1h-1zM108 485h1v1h-1zM110 485h1v1h-1zM109 486h1v1h-1zM107 487h1v1h-1zM108 487h1v1h-1zM107 488h1v1h-1zM109 488h1v1h-1zM109 489h1v1h-1zM108 492h1v1h-1zM111 493h1v1h-1zM107 494h1v1h-1zM110 495h1v1h-1zM107 497h1v1h-1zM107 498h1v1h-1zM107 499h1v1h-1zM108 499h1v1h-1zM108 500h1v1h-1zM110 500h1v1h-1zM108 503h1v1h-1zM108 504h1v1h-1zM107 507h1v1h-1zM108 507h1v1h-1zM110 511h1v1h-1zM108 513h1v1h-1zM109 514h1v1h-1zM109 515h1v1h-1zM110 516h1v1h-1zM109 517h1v1h-1zM107 518h1v1h-1zM108 518h1v1h-1zM109 518h1v1h-1zM107 520h1v1h-1zM107 521h1v1h-1zM111 521h1v1h-1zM108 522h1v1h-1zM107 523h1v1h-1zM111 523h1v1h-1zM112 523h1v1h-1zM108 524h1v1h-1zM110 524h1v1h-1zM107 525h1v1h-1zM111 525h1v1h-1zM108 527h1v1h-1zM111 527h1v1h-1zM107 528h1v1h-1zM108 529h1v1h-1zM109 529h1v1h-1zM108 530h1v1h-1zM107 532h1v1h-1zM108 532h1v1h-1zM107 533h1v1h-1zM108 533h1v1h-1zM113 533h1v1h-1zM111 534h1v1h-1zM108 535h1v1h-1zM107 536h1v1h-1zM110 537h1v1h-1zM107 538h1v1h-1zM108 538h1v1h-1zM110 540h1v1h-1zM113 540h1v1h-1zM107 541h1v1h-1zM108 542h1v1h-1zM109 542h1v1h-1zM108 543h1v1h-1zM111 543h1v1h-1zM108 544h1v1h-1zM109 544h1v1h-1zM107 545h1v1h-1zM113 545h1v1h-1zM107 547h1v1h-1zM109 547h1v1h-1zM109 549h1v1h-1zM110 549h1v1h-1zM107 551h1v1h-1zM107 552h1v1h-1zM108 552h1v1h-1zM109 552h1v1h-1zM109 553h1v1h-1zM111 553h1v1h-1zM110 554h1v1h-1zM111 554h1v1h-1zM108 555h1v1h-1zM110 555h1v1h-1zM112 555h1v1h-1zM107 556h1v1h-1zM113 556h1v1h-1zM107 558h1v1h-1zM108 558h1v1h-1zM109 559h1v1h-1zM109 560h1v1h-1zM107 562h1v1h-1zM110 562h1v1h-1zM107 563h1v1h-1zM108 563h1v1h-1zM110 563h1v1h-1zM112 563h1v1h-1zM108 564h1v1h-1zM110 564h1v1h-1zM111 564h1v1h-1zM107 565h1v1h-1zM108 565h1v1h-1zM108 566h1v1h-1zM109 566h1v1h-1zM110 566h1v1h-1zM109 567h1v1h-1zM108 568h1v1h-1zM110 568h1v1h-1zM111 568h1v1h-1zM112 568h1v1h-1zM108 569h1v1h-1zM110 569h1v1h-1zM111 570h1v1h-1zM108 571h1v1h-1zM109 571h1v1h-1zM112 571h1v1h-1zM114 571h1v1h-1zM107 572h1v1h-1zM110 572h1v1h-1zM108 573h1v1h-1zM111 573h1v1h-1zM108 574h1v1h-1zM108 575h1v1h-1zM109 575h1v1h-1zM112 575h1v1h-1zM113 575h1v1h-1zM109 576h1v1h-1zM111 576h1v1h-1zM107 577h1v1h-1zM111 577h1v1h-1zM113 577h1v1h-1zM109 578h1v1h-1zM110 578h1v1h-1zM113 578h1v1h-1zM110 579h1v1h-1zM111 579h1v1h-1zM107 580h1v1h-1zM108 580h1v1h-1zM109 580h1v1h-1zM110 580h1v1h-1zM107 581h1v1h-1zM108 581h1v1h-1zM112 581h1v1h-1zM110 582h1v1h-1zM111 582h1v1h-1zM107 583h1v1h-1zM108 583h1v1h-1zM109 583h1v1h-1zM110 583h1v1h-1zM111 583h1v1h-1zM107 584h1v1h-1zM108 584h1v1h-1zM109 584h1v1h-1zM113 584h1v1h-1zM115 584h1v1h-1zM107 585h1v1h-1zM114 585h1v1h-1zM115 585h1v1h-1zM108 586h1v1h-1zM110 586h1v1h-1zM107 587h1v1h-1zM108 587h1v1h-1zM109 587h1v1h-1zM111 587h1v1h-1zM107 588h1v1h-1zM111 588h1v1h-1zM112 588h1v1h-1zM113 588h1v1h-1zM108 589h1v1h-1zM112 589h1v1h-1zM114 589h1v1h-1zM107 590h1v1h-1zM109 590h1v1h-1zM110 590h1v1h-1zM107 591h1v1h-1zM108 591h1v1h-1zM111 591h1v1h-1zM112 591h1v1h-1zM107 592h1v1h-1zM108 592h1v1h-1zM110 592h1v1h-1zM107 593h1v1h-1zM110 593h1v1h-1zM109 594h1v1h-1zM110 594h1v1h-1zM107 595h1v1h-1zM108 595h1v1h-1zM110 595h1v1h-1zM111 595h1v1h-1zM113 595h1v1h-1zM109 596h1v1h-1zM110 596h1v1h-1zM107 597h1v1h-1zM108 597h1v1h-1zM110 597h1v1h-1zM116 597h1v1h-1zM109 598h1v1h-1zM114 598h1v1h-1zM107 599h1v1h-1zM109 599h1v1h-1zM110 599h1v1h-1zM111 599h1v1h-1zM114 599h1v1h-1zM115 599h1v1h-1zM109 600h1v1h-1zM110 600h1v1h-1zM111 600h1v1h-1zM112 600h1v1h-1zM113 600h1v1h-1zM114 600h1v1h-1zM108 601h1v1h-1zM110 601h1v1h-1zM113 601h1v1h-1zM114 601h1v1h-1zM116 601h1v1h-1zM107 602h1v1h-1zM108 602h1v1h-1zM109 602h1v1h-1zM110 602h1v1h-1zM112 602h1v1h-1zM113 602h1v1h-1zM116 602h1v1h-1zM111 603h1v1h-1zM112 603h1v1h-1zM113 603h1v1h-1zM114 603h1v1h-1zM107 604h1v1h-1zM108 604h1v1h-1zM109 604h1v1h-1zM110 604h1v1h-1zM111 604h1v1h-1zM112 604h1v1h-1zM113 604h1v1h-1zM114 604h1v1h-1zM117 604h1v1h-1zM107 605h1v1h-1zM108 605h1v1h-1zM111 605h1v1h-1zM112 605h1v1h-1zM113 605h1v1h-1zM114 605h1v1h-1zM115 605h1v1h-1zM119 605h1v1h-1zM107 606h1v1h-1zM108 606h1v1h-1zM109 606h1v1h-1zM111 606h1v1h-1zM113 606h1v1h-1zM114 606h1v1h-1zM115 606h1v1h-1zM117 606h1v1h-1zM118 606h1v1h-1zM108 607h1v1h-1zM111 607h1v1h-1zM116 607h1v1h-1zM117 607h1v1h-1zM118 607h1v1h-1zM108 608h1v1h-1zM109 608h1v1h-1zM110 608h1v1h-1zM111 608h1v1h-1zM112 608h1v1h-1zM113 608h1v1h-1zM116 608h1v1h-1zM120 608h1v1h-1zM110 609h1v1h-1zM111 609h1v1h-1zM112 609h1v1h-1zM114 609h1v1h-1zM115 609h1v1h-1zM116 609h1v1h-1zM117 609h1v1h-1zM108 610h1v1h-1zM109 610h1v1h-1zM110 610h1v1h-1zM111 610h1v1h-1zM113 610h1v1h-1zM114 610h1v1h-1zM109 611h1v1h-1zM111 611h1v1h-1zM114 611h1v1h-1zM115 611h1v1h-1zM116 611h1v1h-1zM119 611h1v1h-1zM120 611h1v1h-1zM121 611h1v1h-1zM124 611h1v1h-1zM107 612h1v1h-1zM109 612h1v1h-1zM111 612h1v1h-1zM112 612h1v1h-1zM115 612h1v1h-1zM118 612h1v1h-1zM119 612h1v1h-1zM120 612h1v1h-1zM121 612h1v1h-1zM123 612h1v1h-1zM126 612h1v1h-1zM110 613h1v1h-1zM112 613h1v1h-1zM113 613h1v1h-1zM115 613h1v1h-1zM118 613h1v1h-1zM119 613h1v1h-1zM121 613h1v1h-1zM122 613h1v1h-1zM123 613h1v1h-1zM125 613h1v1h-1zM126 613h1v1h-1zM127 613h1v1h-1zM128 613h1v1h-1zM675 600h1v1h-1zM675 602h1v1h-1zM670 602h1v1h-1zM674 603h1v1h-1zM673 603h1v1h-1zM671 603h1v1h-1zM675 604h1v1h-1zM674 604h1v1h-1zM673 604h1v1h-1zM674 605h1v1h-1zM671 605h1v1h-1zM674 606h1v1h-1zM673 606h1v1h-1zM672 606h1v1h-1zM669 606h1v1h-1zM675 607h1v1h-1zM673 607h1v1h-1zM671 607h1v1h-1zM670 607h1v1h-1zM674 608h1v1h-1zM673 608h1v1h-1zM672 608h1v1h-1zM669 608h1v1h-1zM674 609h1v1h-1zM675 610h1v1h-1zM673 610h1v1h-1zM672 610h1v1h-1zM671 610h1v1h-1zM670 610h1v1h-1zM669 610h1v1h-1zM666 610h1v1h-1zM663 610h1v1h-1zM674 611h1v1h-1zM673 611h1v1h-1zM670 611h1v1h-1zM668 611h1v1h-1zM667 611h1v1h-1zM665 611h1v1h-1zM664 611h1v1h-1zM662 611h1v1h-1zM675 612h1v1h-1zM671 612h1v1h-1zM670 612h1v1h-1zM666 612h1v1h-1zM665 612h1v1h-1zM664 612h1v1h-1zM663 612h1v1h-1zM658 612h1v1h-1zM657 612h1v1h-1zM675 613h1v1h-1zM674 613h1v1h-1zM673 613h1v1h-1zM665 613h1v1h-1zM664 613h1v1h-1zM662 613h1v1h-1zM659 613h1v1h-1zM658 613h1v1h-1zM655 613h1v1h-1zM653 613h1v1h-1zM650 613h1v1h-1zM647 613h1v1h-1zM646 613h1v1h-1zM645 613h1v1h-1zM644 613h1v1h-1zM641 613h1v1h-1zM638 613h1v1h-1zM637 613h1v1h-1zM636 613h1v1h-1z" fill="#1a0000"/>
<path d="M107 312h1v1h-1zM107 313h1v1h-1zM110 318h1v1h-1zM108 323h1v1h-1zM107 327h1v1h-1zM108 327h1v1h-1zM109 327h1v1h-1zM111 331h1v1h-1zM109 333h1v1h-1zM108 334h1v1h-1zM111 335h1v1h-1zM107 336h1v1h-1zM107 337h1v1h-1zM108 339h1v1h-1zM107 341h1v1h-1zM107 343h1v1h-1zM108 350h1v1h-1zM107 354h1v1h-1zM109 354h1v1h-1zM110 355h1v1h-1zM111 355h1v1h-1zM108 357h1v1h-1zM107 358h1v1h-1zM108 358h1v1h-1zM108 361h1v1h-1zM110 361h1v1h-1zM107 362h1v1h-1zM109 362h1v1h-1zM107 364h1v1h-1zM107 366h1v1h-1zM108 366h1v1h-1zM107 368h1v1h-1zM108 370h1v1h-1zM108 372h1v1h-1zM108 380h1v1h-1zM107 381h1v1h-1zM107 383h1v1h-1zM110 385h1v1h-1zM109 386h1v1h-1zM107 388h1v1h-1zM108 388h1v1h-1zM108 389h1v1h-1zM109 391h1v1h-1zM110 392h1v1h-1zM108 393h1v1h-1zM108 394h1v1h-1zM107 395h1v1h-1zM108 396h1v1h-1zM107 397h1v1h-1zM107 398h1v1h-1zM108 399h1v1h-1zM111 399h1v1h-1zM107 400h1v1h-1zM109 401h1v1h-1zM111 401h1v1h-1zM110 405h1v1h-1zM109 408h1v1h-1zM107 414h1v1h-1zM109 415h1v1h-1zM108 416h1v1h-1zM107 420h1v1h-1zM107 423h1v1h-1zM108 426h1v1h-1zM108 430h1v1h-1zM110 430h1v1h-1zM107 432h1v1h-1zM109 434h1v1h-1zM107 436h1v1h-1zM109 436h1v1h-1zM107 437h1v1h-1zM108 437h1v1h-1zM108 439h1v1h-1zM109 440h1v1h-1zM107 446h1v1h-1zM110 446h1v1h-1zM107 447h1v1h-1zM110 447h1v1h-1zM108 448h1v1h-1zM107 450h1v1h-1zM108 450h1v1h-1zM110 451h1v1h-1zM107 452h1v1h-1zM107 456h1v1h-1zM109 457h1v1h-1zM110 457h1v1h-1zM109 459h1v1h-1zM109 465h1v1h-1zM107 466h1v1h-1zM108 467h1v1h-1zM110 468h1v1h-1zM107 469h1v1h-1zM107 477h1v1h-1zM108 478h1v1h-1zM107 481h1v1h-1zM109 481h1v1h-1zM107 486h1v1h-1zM110 487h1v1h-1zM110 489h1v1h-1zM107 491h1v1h-1zM108 491h1v1h-1zM110 492h1v1h-1zM107 493h1v1h-1zM107 496h1v1h-1zM108 497h1v1h-1zM107 501h1v1h-1zM110 502h1v1h-1zM107 503h1v1h-1zM111 503h1v1h-1zM107 504h1v1h-1zM109 504h1v1h-1zM110 504h1v1h-1zM107 505h1v1h-1zM109 506h1v1h-1zM107 508h1v1h-1zM108 508h1v1h-1zM107 509h1v1h-1zM108 509h1v1h-1zM107 511h1v1h-1zM107 512h1v1h-1zM107 513h1v1h-1zM110 514h1v1h-1zM107 516h1v1h-1zM107 517h1v1h-1zM110 517h1v1h-1zM110 518h1v1h-1zM107 519h1v1h-1zM110 519h1v1h-1zM108 521h1v1h-1zM109 523h1v1h-1zM112 525h1v1h-1zM108 526h1v1h-1zM111 530h1v1h-1zM109 531h1v1h-1zM111 531h1v1h-1zM112 532h1v1h-1zM107 534h1v1h-1zM112 534h1v1h-1zM107 535h1v1h-1zM107 537h1v1h-1zM108 537h1v1h-1zM111 537h1v1h-1zM108 539h1v1h-1zM109 539h1v1h-1zM107 540h1v1h-1zM109 541h1v1h-1zM107 543h1v1h-1zM107 544h1v1h-1zM109 545h1v1h-1zM111 545h1v1h-1zM107 546h1v1h-1zM108 546h1v1h-1zM109 546h1v1h-1zM110 546h1v1h-1zM108 547h1v1h-1zM107 548h1v1h-1zM109 548h1v1h-1zM112 548h1v1h-1zM107 549h1v1h-1zM108 549h1v1h-1zM111 549h1v1h-1zM110 550h1v1h-1zM111 550h1v1h-1zM111 552h1v1h-1zM108 554h1v1h-1zM109 554h1v1h-1zM107 555h1v1h-1zM109 556h1v1h-1zM110 556h1v1h-1zM111 556h1v1h-1zM112 556h1v1h-1zM107 557h1v1h-1zM108 557h1v1h-1zM109 557h1v1h-1zM112 557h1v1h-1zM109 558h1v1h-1zM113 558h1v1h-1zM110 559h1v1h-1zM108 560h1v1h-1zM109 561h1v1h-1zM114 561h1v1h-1zM111 562h1v1h-1zM114 562h1v1h-1zM109 563h1v1h-1zM110 565h1v1h-1zM107 567h1v1h-1zM108 567h1v1h-1zM111 567h1v1h-1zM109 568h1v1h-1zM107 570h1v1h-1zM108 570h1v1h-1zM109 570h1v1h-1zM110 570h1v1h-1zM113 570h1v1h-1zM110 571h1v1h-1zM111 571h1v1h-1zM108 572h1v1h-1zM111 572h1v1h-1zM109 573h1v1h-1zM110 574h1v1h-1zM111 574h1v1h-1zM111 575h1v1h-1zM107 576h1v1h-1zM108 576h1v1h-1zM110 577h1v1h-1zM114 577h1v1h-1zM107 578h1v1h-1zM111 578h1v1h-1zM108 579h1v1h-1zM111 580h1v1h-1zM112 580h1v1h-1zM110 581h1v1h-1zM111 581h1v1h-1zM109 582h1v1h-1zM110 584h1v1h-1zM108 585h1v1h-1zM109 586h1v1h-1zM110 587h1v1h-1zM113 587h1v1h-1zM109 588h1v1h-1zM107 589h1v1h-1zM109 589h1v1h-1zM115 589h1v1h-1zM109 592h1v1h-1zM112 592h1v1h-1zM115 592h1v1h-1zM108 593h1v1h-1zM109 593h1v1h-1zM112 593h1v1h-1zM107 594h1v1h-1zM114 595h1v1h-1zM115 595h1v1h-1zM107 596h1v1h-1zM108 596h1v1h-1zM112 596h1v1h-1zM114 596h1v1h-1zM116 596h1v1h-1zM112 597h1v1h-1zM113 597h1v1h-1zM107 598h1v1h-1zM110 598h1v1h-1zM111 598h1v1h-1zM113 598h1v1h-1zM115 598h1v1h-1zM108 599h1v1h-1zM112 599h1v1h-1zM107 600h1v1h-1zM108 600h1v1h-1zM107 601h1v1h-1zM109 601h1v1h-1zM111 601h1v1h-1zM112 601h1v1h-1zM111 602h1v1h-1zM107 603h1v1h-1zM108 603h1v1h-1zM109 603h1v1h-1zM110 603h1v1h-1zM115 603h1v1h-1zM109 605h1v1h-1zM110 605h1v1h-1zM110 606h1v1h-1zM112 606h1v1h-1zM107 607h1v1h-1zM109 607h1v1h-1zM110 607h1v1h-1zM113 607h1v1h-1zM114 607h1v1h-1zM115 607h1v1h-1zM107 608h1v1h-1zM115 608h1v1h-1zM118 608h1v1h-1zM107 609h1v1h-1zM108 609h1v1h-1zM109 609h1v1h-1zM113 609h1v1h-1zM119 609h1v1h-1zM107 610h1v1h-1zM112 610h1v1h-1zM115 610h1v1h-1zM116 610h1v1h-1zM117 610h1v1h-1zM118 610h1v1h-1zM120 610h1v1h-1zM107 611h1v1h-1zM108 611h1v1h-1zM110 611h1v1h-1zM112 611h1v1h-1zM113 611h1v1h-1zM117 611h1v1h-1zM118 611h1v1h-1zM122 611h1v1h-1zM108 612h1v1h-1zM110 612h1v1h-1zM113 612h1v1h-1zM114 612h1v1h-1zM116 612h1v1h-1zM117 612h1v1h-1zM122 612h1v1h-1zM124 612h1v1h-1zM125 612h1v1h-1zM128 612h1v1h-1zM107 613h1v1h-1zM108 613h1v1h-1zM109 613h1v1h-1zM111 613h1v1h-1zM114 613h1v1h-1zM116 613h1v1h-1zM117 613h1v1h-1zM120 613h1v1h-1zM124 613h1v1h-1zM675 597h1v1h-1zM673 597h1v1h-1zM675 601h1v1h-1zM674 601h1v1h-1zM673 601h1v1h-1zM674 602h1v1h-1zM673 602h1v1h-1zM675 603h1v1h-1zM668 604h1v1h-1zM675 605h1v1h-1zM673 605h1v1h-1zM672 605h1v1h-1zM675 606h1v1h-1zM671 606h1v1h-1zM674 607h1v1h-1zM672 607h1v1h-1zM666 607h1v1h-1zM675 608h1v1h-1zM671 608h1v1h-1zM670 608h1v1h-1zM675 609h1v1h-1zM673 609h1v1h-1zM672 609h1v1h-1zM671 609h1v1h-1zM670 609h1v1h-1zM668 609h1v1h-1zM667 609h1v1h-1zM674 610h1v1h-1zM668 610h1v1h-1zM667 610h1v1h-1zM665 610h1v1h-1zM661 610h1v1h-1zM675 611h1v1h-1zM672 611h1v1h-1zM671 611h1v1h-1zM669 611h1v1h-1zM666 611h1v1h-1zM663 611h1v1h-1zM661 611h1v1h-1zM674 612h1v1h-1zM673 612h1v1h-1zM672 612h1v1h-1zM669 612h1v1h-1zM668 612h1v1h-1zM667 612h1v1h-1zM662 612h1v1h-1zM661 612h1v1h-1zM660 612h1v1h-1zM659 612h1v1h-1zM655 612h1v1h-1zM672 613h1v1h-1zM671 613h1v1h-1zM670 613h1v1h-1zM669 613h1v1h-1zM668 613h1v1h-1zM667 613h1v1h-1zM666 613h1v1h-1zM663 613h1v1h-1zM661 613h1v1h-1zM660 613h1v1h-1zM657 613h1v1h-1zM656 613h1v1h-1zM654 613h1v1h-1zM652 613h1v1h-1zM651 613h1v1h-1zM649 613h1v1h-1zM648 613h1v1h-1zM643 613h1v1h-1zM642 613h1v1h-1zM640 613h1v1h-1zM639 613h1v1h-1zM635 613h1v1h-1zM634 613h1v1h-1z" fill="#8a0000"/>
<rect x="107" y="309" width="569" height="1.5" fill="#3a0000" fill-opacity="0.5"/>
<path d="M108 550.6 Q130 551.5 160 554" stroke="#fffff0" stroke-width="1.1" fill="none"/>
<rect x="106" y="308.3" width="570" height="305.6" fill="none" stroke="#000" stroke-width="1.5" stroke-linejoin="miter"/>
<line x1="100" y1="461.5" x2="683" y2="461.5" stroke="#0000ff" stroke-width="1"/>
<line x1="391.4" y1="305" x2="391.4" y2="617.6" stroke="#0000ff" stroke-width="1"/>
<line x1="105.75" y1="613.9" x2="105.75" y2="620.4" stroke="#000" stroke-width="1.5"/>
<text x="102.9" y="637" font-size="10.1" textLength="5.7" lengthAdjust="spacingAndGlyphs" fill="#000">0</text>
<line x1="175.39" y1="613.9" x2="175.39" y2="620.4" stroke="#000" stroke-width="1.5"/>
<text x="166.25" y="637" font-size="10.1" textLength="18.17" lengthAdjust="spacingAndGlyphs" fill="#000">250</text>
<line x1="245.04" y1="613.9" x2="245.04" y2="620.4" stroke="#000" stroke-width="1.5"/>
<text x="236.03" y="637" font-size="10.1" textLength="18.01" lengthAdjust="spacingAndGlyphs" fill="#000">500</text>
<line x1="314.69" y1="613.9" x2="314.69" y2="620.4" stroke="#000" stroke-width="1.5"/>
<text x="305.57" y="637" font-size="10.1" textLength="18.09" lengthAdjust="spacingAndGlyphs" fill="#000">750</text>
<line x1="384.33" y1="613.9" x2="384.33" y2="620.4" stroke="#000" stroke-width="1.5"/>
<text x="371.99" y="637" font-size="10.1" textLength="24.28" lengthAdjust="spacingAndGlyphs" fill="#000">1000</text>
<line x1="453.97" y1="613.9" x2="453.97" y2="620.4" stroke="#000" stroke-width="1.5"/>
<text x="441.63" y="637" font-size="10.1" textLength="24.28" lengthAdjust="spacingAndGlyphs" fill="#000">1250</text>
<line x1="523.62" y1="613.9" x2="523.62" y2="620.4" stroke="#000" stroke-width="1.5"/>
<text x="511.28" y="637" font-size="10.1" textLength="24.28" lengthAdjust="spacingAndGlyphs" fill="#000">1500</text>
<line x1="593.26" y1="613.9" x2="593.26" y2="620.4" stroke="#000" stroke-width="1.5"/>
<text x="580.92" y="637" font-size="10.1" textLength="24.28" lengthAdjust="spacingAndGlyphs" fill="#000">1750</text>
<line x1="662.91" y1="613.9" x2="662.91" y2="620.4" stroke="#000" stroke-width="1.5"/>
<text x="650.67" y="637" font-size="10.1" textLength="24.36" lengthAdjust="spacingAndGlyphs" fill="#000">2000</text>
<line x1="106" y1="614" x2="99.5" y2="614" stroke="#000" stroke-width="1.5"/>
<text x="85.2" y="617.6" font-size="10.1" textLength="5.7" lengthAdjust="spacingAndGlyphs" fill="#000">0</text>
<line x1="106" y1="558.37" x2="99.5" y2="558.37" stroke="#000" stroke-width="1.5"/>
<text x="72.76" y="561.97" font-size="10.1" textLength="18.17" lengthAdjust="spacingAndGlyphs" fill="#000">200</text>
<line x1="106" y1="502.74" x2="99.5" y2="502.74" stroke="#000" stroke-width="1.5"/>
<text x="72.82" y="506.34" font-size="10.1" textLength="18.11" lengthAdjust="spacingAndGlyphs" fill="#000">400</text>
<line x1="106" y1="447.11" x2="99.5" y2="447.11" stroke="#000" stroke-width="1.5"/>
<text x="72.72" y="450.71" font-size="10.1" textLength="18.21" lengthAdjust="spacingAndGlyphs" fill="#000">600</text>
<line x1="106" y1="391.48" x2="99.5" y2="391.48" stroke="#000" stroke-width="1.5"/>
<text x="72.78" y="395.08" font-size="10.1" textLength="18.14" lengthAdjust="spacingAndGlyphs" fill="#000">800</text>
<line x1="106" y1="335.85" x2="99.5" y2="335.85" stroke="#000" stroke-width="1.5"/>
<text x="66.65" y="339.45" font-size="10.1" textLength="24.28" lengthAdjust="spacingAndGlyphs" fill="#000">1000</text>
<text x="388.02" y="654.8" font-size="10.4" textLength="6.94" lengthAdjust="spacingAndGlyphs" fill="#000">X</text>
<text transform="translate(53.6 461) rotate(-90)" x="-3.42" y="0" font-size="10.4" textLength="6.84" lengthAdjust="spacingAndGlyphs" fill="#000">Y</text>
<rect x="712" y="113" width="35" height="695.7" fill="url(#cbgrad)"/>
<rect x="712" y="113" width="35" height="695.7" fill="none" stroke="#000" stroke-width="1.5" stroke-linejoin="miter"/>
<line x1="747" y1="743.9" x2="753.5" y2="743.9" stroke="#000" stroke-width="1.5"/>
<text x="761.87" y="747.5" font-size="10.1" textLength="18.09" lengthAdjust="spacingAndGlyphs" fill="#000">100</text>
<line x1="747" y1="601.92" x2="753.5" y2="601.92" stroke="#000" stroke-width="1.5"/>
<text x="761.87" y="605.52" font-size="10.1" textLength="18.09" lengthAdjust="spacingAndGlyphs" fill="#000">150</text>
<line x1="747" y1="459.95" x2="753.5" y2="459.95" stroke="#000" stroke-width="1.5"/>
<text x="762.15" y="463.55" font-size="10.1" textLength="18.17" lengthAdjust="spacingAndGlyphs" fill="#000">200</text>
<line x1="747" y1="317.97" x2="753.5" y2="317.97" stroke="#000" stroke-width="1.5"/>
<text x="762.15" y="321.57" font-size="10.1" textLength="18.17" lengthAdjust="spacingAndGlyphs" fill="#000">250</text>
<line x1="747" y1="176" x2="753.5" y2="176" stroke="#000" stroke-width="1.5"/>
<text x="762.29" y="179.6" font-size="10.1" textLength="18" lengthAdjust="spacingAndGlyphs" fill="#000">300</text>
<path d="M911.75 232 L913.2 232 L918.8 232 L918.8 227.6 L925.2 227.6 L925.2 229.8 L930.1 229.8 L930.1 227.6 L935.7 227.6 L935.7 226.5 L940.9 226.5 L940.9 221.6 L947.2 221.6 L947.2 212.6 L952.8 212.6 L952.8 194 L958.1 194 L958.1 174.8 L963.6 174.8 L963.6 155.8 L969 155.8 L969 140.9 L974.8 140.9 L974.8 130 L981 130 L981 123 L986 123 L986 120 L992.5 120 L992.5 118.8 L1019.4 118.8 L1019.4 119.7 L1024.9 119.7 L1024.9 121.9 L1031.3 121.9 L1031.3 123 L1036.8 123 L1036.8 124.7 L1047.5 124.7 L1047.5 126.7 L1053.2 126.7 L1053.2 127.7 L1064.1 127.7 L1064.1 128.9 L1090.6 128.9 L1090.6 129.7 L1096.6 129.7 L1096.6 130.7 L1104 130.7 L1104 132.7 L1109.3 132.7 L1109.3 134.2 L1119.7 134.2 L1119.7 135.7 L1125.7 135.7 L1125.7 136.7 L1131 136.7 L1131 137.9 L1137 137.9 L1137 139.1 L1142.9 139.1 L1142.9 139.8 L1153.4 139.8 L1153.4 141.2 L1158.6 141.2 L1158.6 143.1 L1164.6 143.1 L1164.6 146.1 L1170.6 146.1 L1170.6 149.9 L1175.8 149.9 L1175.8 156.6 L1181.8 156.6 L1181.8 144.6 L1185 144.6" fill="none" stroke="#0000ff" stroke-width="1.5"/>
<rect x="911" y="113" width="274" height="120" fill="none" stroke="#000" stroke-width="1.5" stroke-linejoin="miter"/>
<line x1="941" y1="233" x2="941" y2="239.5" stroke="#000" stroke-width="1.5"/>
<text x="931.75" y="256" font-size="10.1" textLength="18.09" lengthAdjust="spacingAndGlyphs" fill="#000">100</text>
<line x1="995.98" y1="233" x2="995.98" y2="239.5" stroke="#000" stroke-width="1.5"/>
<line x1="1050.95" y1="233" x2="1050.95" y2="239.5" stroke="#000" stroke-width="1.5"/>
<text x="1041.8" y="256" font-size="10.1" textLength="18.17" lengthAdjust="spacingAndGlyphs" fill="#000">200</text>
<line x1="1105.92" y1="233" x2="1105.92" y2="239.5" stroke="#000" stroke-width="1.5"/>
<line x1="1160.9" y1="233" x2="1160.9" y2="239.5" stroke="#000" stroke-width="1.5"/>
<text x="1151.91" y="256" font-size="10.1" textLength="18" lengthAdjust="spacingAndGlyphs" fill="#000">300</text>
<line x1="911" y1="224" x2="904.5" y2="224" stroke="#000" stroke-width="1.5"/>
<text x="880.52" y="227.6" font-size="10.1" textLength="14.9" lengthAdjust="spacingAndGlyphs" fill="#000">3.0</text>
<line x1="911" y1="196.97" x2="904.5" y2="196.97" stroke="#000" stroke-width="1.5"/>
<text x="880.73" y="200.57" font-size="10.1" textLength="14.72" lengthAdjust="spacingAndGlyphs" fill="#000">3.5</text>
<line x1="911" y1="169.94" x2="904.5" y2="169.94" stroke="#000" stroke-width="1.5"/>
<text x="880.41" y="173.54" font-size="10.1" textLength="15.01" lengthAdjust="spacingAndGlyphs" fill="#000">4.0</text>
<line x1="911" y1="142.91" x2="904.5" y2="142.91" stroke="#000" stroke-width="1.5"/>
<text x="880.62" y="146.51" font-size="10.1" textLength="14.83" lengthAdjust="spacingAndGlyphs" fill="#000">4.5</text>
<line x1="911" y1="115.88" x2="904.5" y2="115.88" stroke="#000" stroke-width="1.5"/>
<text x="880.51" y="119.48" font-size="10.1" textLength="14.91" lengthAdjust="spacingAndGlyphs" fill="#000">5.0</text>
<text x="1030.66" y="273.8" font-size="10.4" textLength="34.6" lengthAdjust="spacingAndGlyphs" fill="#000">counts</text>
<text transform="translate(867.7 173.6) rotate(-90)" x="-35.93" y="0" font-size="10.4" textLength="71.08" lengthAdjust="spacingAndGlyphs" fill="#000">log frequency</text>
<text transform="translate(1195 175) rotate(90)" x="-46.6" y="0" font-size="10.4" textLength="93.12" lengthAdjust="spacingAndGlyphs" fill="#000">histogram (detail)</text>
<path d="M911.75 404 L911.75 404 L924.9 404 L924.9 290.8 L930.1 290.8 L930.1 355.9 L935.7 355.9 L935.7 362.7 L940.9 362.7 L940.9 366 L946.9 366 L946.9 364.9 L952.8 364.9 L952.8 364 L958.1 364 L958.1 361.8 L963.6 361.8 L963.6 360.7 L969.3 360.7 L969.3 362.2 L974.8 362.2 L974.8 365.6 L981 365.6 L981 368.9 L991.7 368.9 L991.7 371.6 L997.7 371.6 L997.7 373 L1003 373 L1003 371.6 L1008.9 371.6 L1008.9 374.5 L1014.1 374.5 L1014.1 375.7 L1019.4 375.7 L1019.4 374.6 L1024.9 374.6 L1024.9 378.7 L1041.8 378.7 L1041.8 380.9 L1051.7 380.9 L1051.7 382.1 L1058.8 382.1 L1058.8 386.1 L1063.7 386.1 L1063.7 383.6 L1070.1 383.6 L1070.1 386.6 L1075.6 386.6 L1075.6 393.2 L1080.9 393.2 L1080.9 394.8 L1086.9 394.8 L1086.9 396.9 L1092.1 396.9 L1092.1 399.6 L1098.1 399.6 L1098.1 393.2 L1104 393.2 L1104 390.9 L1109 390.9 L1109 399.6 L1114.5 399.6 L1114.5 404 L1119.7 404 L1119.7 392.9 L1125.7 392.9 L1125.7 399.6 L1131.4 399.6 L1131.4 396.9 L1136.9 396.9 L1136.9 404 L1142.9 404 L1142.9 399.6 L1148.1 399.6 L1148.1 392.9 L1153.8 392.9 L1153.8 404 L1164.6 404 L1164.6 396.9 L1170.9 396.9 L1170.9 404 L1182.2 404 L1182.2 399.6 L1185 399.6" fill="none" stroke="#0000ff" stroke-width="1.5"/>
<rect x="911" y="285" width="274" height="119.8" fill="none" stroke="#000" stroke-width="1.5" stroke-linejoin="miter"/>
<line x1="929.3" y1="404.8" x2="929.3" y2="411.3" stroke="#000" stroke-width="1.5"/>
<text x="926.45" y="428.2" font-size="10.1" textLength="5.7" lengthAdjust="spacingAndGlyphs" fill="#000">0</text>
<line x1="966.6" y1="404.8" x2="966.6" y2="411.3" stroke="#000" stroke-width="1.5"/>
<line x1="1003.9" y1="404.8" x2="1003.9" y2="411.3" stroke="#000" stroke-width="1.5"/>
<text x="988.57" y="428.2" font-size="10.1" textLength="30.54" lengthAdjust="spacingAndGlyphs" fill="#000">20000</text>
<line x1="1041.2" y1="404.8" x2="1041.2" y2="411.3" stroke="#000" stroke-width="1.5"/>
<line x1="1078.5" y1="404.8" x2="1078.5" y2="411.3" stroke="#000" stroke-width="1.5"/>
<text x="1063.35" y="428.2" font-size="10.1" textLength="30.48" lengthAdjust="spacingAndGlyphs" fill="#000">40000</text>
<line x1="1115.8" y1="404.8" x2="1115.8" y2="411.3" stroke="#000" stroke-width="1.5"/>
<line x1="1153.1" y1="404.8" x2="1153.1" y2="411.3" stroke="#000" stroke-width="1.5"/>
<text x="1137.74" y="428.2" font-size="10.1" textLength="30.58" lengthAdjust="spacingAndGlyphs" fill="#000">60000</text>
<line x1="911" y1="404.6" x2="904.5" y2="404.6" stroke="#000" stroke-width="1.5"/>
<text x="890.7" y="408.2" font-size="10.1" textLength="5.7" lengthAdjust="spacingAndGlyphs" fill="#000">0</text>
<line x1="911" y1="368.8" x2="904.5" y2="368.8" stroke="#000" stroke-width="1.5"/>
<text x="891" y="372.4" font-size="10.1" textLength="5.49" lengthAdjust="spacingAndGlyphs" fill="#000">2</text>
<line x1="911" y1="333" x2="904.5" y2="333" stroke="#000" stroke-width="1.5"/>
<text x="890.6" y="336.6" font-size="10.1" textLength="5.7" lengthAdjust="spacingAndGlyphs" fill="#000">4</text>
<line x1="911" y1="297.2" x2="904.5" y2="297.2" stroke="#000" stroke-width="1.5"/>
<text x="890.57" y="300.8" font-size="10.1" textLength="5.9" lengthAdjust="spacingAndGlyphs" fill="#000">6</text>
<text x="1030.66" y="445.8" font-size="10.4" textLength="34.6" lengthAdjust="spacingAndGlyphs" fill="#000">counts</text>
<text transform="translate(877.5 346) rotate(-90)" x="-35.93" y="0" font-size="10.4" textLength="71.08" lengthAdjust="spacingAndGlyphs" fill="#000">log frequency</text>
<text transform="translate(1195 349.4) rotate(90)" x="-40.01" y="0" font-size="10.4" textLength="79.92" lengthAdjust="spacingAndGlyphs" fill="#000">histogram (full)</text>
<svg x="911.0" y="517.0" width="274.0" height="120.0" viewBox="911.0 517.0 274.0 120.0" overflow="hidden"><path d="M911.8 640.0 L911.9 573.8 L912.1 576.0 L912.2 578.4 L912.3 576.7 L912.5 578.7 L912.6 574.6 L912.7 569.6 L912.9 576.7 L913.0 577.2 L913.1 572.8 L913.3 573.3 L913.4 574.3 L913.5 578.3 L913.7 574.8 L913.8 571.9 L913.9 579.8 L914.1 576.4 L914.2 582.0 L914.3 579.6 L914.4 581.7 L914.6 575.4 L914.7 579.4 L914.8 573.4 L915.0 573.8 L915.1 575.1 L915.2 584.2 L915.4 576.5 L915.5 574.5 L915.6 573.9 L915.8 580.3 L915.9 576.1 L916.0 578.1 L916.2 577.4 L916.3 570.1 L916.4 577.3 L916.6 574.3 L916.7 570.7 L916.8 576.4 L917.0 574.6 L917.1 573.7 L917.2 573.8 L917.4 578.9 L917.5 573.8 L917.6 568.8 L917.8 580.1 L917.9 570.7 L918.0 573.6 L918.2 576.5 L918.3 566.2 L918.4 571.0 L918.6 578.6 L918.7 573.7 L918.8 571.7 L919.0 574.7 L919.1 571.3 L919.2 574.2 L919.4 571.3 L919.5 568.3 L919.6 576.5 L919.8 573.1 L919.9 575.7 L920.0 573.4 L920.1 578.5 L920.3 576.1 L920.4 574.7 L920.5 570.4 L920.7 569.4 L920.8 579.0 L920.9 577.0 L921.1 571.4 L921.2 581.6 L921.3 575.7 L921.5 574.3 L921.6 569.0 L921.7 571.2 L921.9 575.2 L922.0 575.3 L922.1 574.9 L922.3 568.0 L922.4 575.6 L922.5 575.1 L922.7 572.5 L922.8 574.4 L922.9 574.7 L923.1 578.3 L923.2 574.0 L923.3 575.7 L923.5 569.4 L923.6 571.4 L923.7 574.1 L923.9 571.4 L924.0 575.3 L924.1 572.1 L924.3 574.0 L924.4 571.8 L924.5 579.1 L924.7 572.7 L924.8 580.7 L924.9 548.7 L925.0 575.3 L925.2 577.6 L925.3 573.5 L925.4 565.4 L925.6 577.4 L925.7 576.6 L925.8 573.4 L926.0 572.3 L926.1 574.9 L926.2 575.0 L926.4 571.5 L926.5 572.2 L926.6 578.3 L926.8 574.6 L926.9 574.2 L927.0 578.4 L927.2 573.3 L927.3 577.7 L927.4 570.6 L927.6 573.6 L927.7 574.0 L927.8 576.7 L928.0 574.9 L928.1 582.2 L928.2 578.9 L928.4 573.0 L928.5 582.8 L928.6 551.6 L928.8 581.3 L928.9 571.6 L929.0 577.8 L929.2 571.5 L929.3 574.1 L929.4 580.6 L929.6 569.7 L929.7 569.0 L929.8 574.9 L930.0 575.7 L930.1 575.3 L930.2 578.5 L930.3 570.4 L930.5 576.8 L930.6 574.9 L930.7 577.8 L930.9 514.0 L931.0 579.7 L931.1 569.8 L931.3 575.3 L931.4 571.0 L931.5 574.7 L931.7 577.5 L931.8 576.1 L931.9 577.0 L932.1 574.8 L932.2 576.3 L932.3 576.0 L932.5 580.2 L932.6 578.0 L932.7 568.4 L932.9 577.4 L933.0 578.9 L933.1 573.5 L933.3 569.4 L933.4 580.5 L933.5 575.7 L933.7 577.3 L933.8 581.7 L933.9 572.0 L934.1 574.9 L934.2 574.6 L934.3 577.8 L934.5 573.1 L934.6 577.0 L934.7 575.4 L934.9 579.2 L935.0 579.6 L935.1 569.6 L935.3 576.8 L935.4 573.7 L935.5 575.0 L935.6 576.5 L935.8 576.8 L935.9 572.4 L936.0 576.0 L936.2 575.4 L936.3 574.7 L936.4 570.2 L936.6 572.1 L936.7 573.3 L936.8 577.0 L937.0 580.1 L937.1 571.0 L937.2 571.0 L937.4 575.3 L937.5 572.6 L937.6 571.6 L937.8 571.4 L937.9 571.1 L938.0 576.4 L938.2 568.7 L938.3 579.5 L938.4 571.3 L938.6 572.7 L938.7 571.2 L938.8 592.5 L939.0 568.8 L939.1 579.0 L939.2 581.1 L939.4 571.3 L939.5 578.4 L939.6 574.5 L939.8 571.2 L939.9 580.8 L940.0 600.5 L940.2 573.4 L940.3 574.2 L940.4 572.0 L940.6 574.2 L940.7 577.7 L940.8 580.2 L940.9 574.9 L941.1 578.1 L941.2 580.7 L941.3 572.3 L941.5 574.4 L941.6 572.6 L941.7 578.0 L941.9 576.7 L942.0 578.0 L942.1 577.6 L942.3 573.3 L942.4 577.1 L942.5 572.7 L942.7 572.7 L942.8 566.1 L942.9 579.4 L943.1 570.5 L943.2 574.3 L943.3 574.0 L943.5 579.6 L943.6 575.7 L943.7 571.0 L943.9 574.2 L944.0 573.5 L944.1 574.9 L944.3 569.3 L944.4 573.9 L944.5 582.3 L944.7 576.4 L944.8 581.4 L944.9 586.4 L945.1 575.8 L945.2 568.5 L945.3 573.5 L945.5 578.2 L945.6 577.3 L945.7 569.2 L945.9 577.6 L946.0 573.4 L946.1 573.8 L946.2 573.4 L946.4 570.4 L946.5 571.4 L946.6 572.7 L946.8 577.6 L946.9 571.5 L947.0 576.1 L947.2 569.2 L947.3 578.4 L947.4 574.0 L947.6 573.5 L947.7 578.6 L947.8 566.7 L948.0 567.7 L948.1 575.2 L948.2 570.4 L948.4 571.9 L948.5 583.6 L948.6 572.4 L948.8 573.6 L948.9 573.1 L949.0 577.6 L949.2 574.4 L949.3 574.1 L949.4 568.7 L949.6 580.0 L949.7 573.4 L949.8 567.4 L950.0 575.5 L950.1 574.9 L950.2 580.4 L950.4 567.3 L950.5 569.6 L950.6 569.8 L950.8 570.8 L950.9 573.0 L951.0 572.6 L951.2 574.4 L951.3 573.2 L951.4 573.2 L951.5 567.5 L951.7 571.3 L951.8 573.7 L951.9 575.7 L952.1 575.9 L952.2 567.2 L952.3 571.5 L952.5 573.2 L952.6 574.8 L952.7 577.8 L952.9 573.8 L953.0 570.1 L953.1 575.1 L953.3 574.5 L953.4 574.4 L953.5 573.2 L953.7 579.8 L953.8 574.5 L953.9 577.0 L954.1 570.2 L954.2 576.7 L954.3 571.4 L954.5 567.8 L954.6 575.0 L954.7 576.1 L954.9 573.0 L955.0 573.8 L955.1 577.7 L955.3 572.0 L955.4 566.0 L955.5 574.9 L955.7 574.7 L955.8 578.0 L955.9 572.7 L956.1 578.8 L956.2 578.3 L956.3 569.0 L956.5 577.6 L956.6 569.8 L956.7 568.1 L956.8 573.1 L957.0 572.0 L957.1 566.5 L957.2 574.9 L957.4 576.5 L957.5 579.5 L957.6 574.1 L957.8 568.5 L957.9 570.5 L958.0 578.0 L958.2 577.7 L958.3 576.3 L958.4 573.2 L958.6 575.2 L958.7 573.6 L958.8 561.2 L959.0 575.6 L959.1 574.7 L959.2 573.7 L959.4 574.9 L959.5 572.6 L959.6 567.3 L959.8 572.3 L959.9 574.4 L960.0 581.2 L960.2 573.2 L960.3 582.3 L960.4 580.2 L960.6 571.4 L960.7 572.0 L960.8 575.4 L961.0 581.5 L961.1 576.3 L961.2 577.5 L961.4 572.4 L961.5 566.1 L961.6 574.1 L961.8 578.0 L961.9 579.5 L962.0 575.2 L962.1 575.7 L962.3 579.5 L962.4 574.6 L962.5 579.5 L962.7 570.7 L962.8 571.0 L962.9 570.9 L963.1 577.0 L963.2 573.1 L963.3 575.7 L963.5 576.7 L963.6 576.5 L963.7 580.3 L963.9 580.8 L964.0 572.1 L964.1 576.0 L964.3 574.4 L964.4 571.4 L964.5 582.0 L964.7 578.3 L964.8 574.6 L964.9 573.8 L965.1 576.8 L965.2 571.3 L965.3 574.5 L965.5 580.1 L965.6 579.0 L965.7 572.2 L965.9 573.5 L966.0 582.7 L966.1 570.1 L966.3 573.0 L966.4 570.1 L966.5 572.0 L966.7 576.5 L966.8 579.8 L966.9 565.5 L967.1 576.1 L967.2 569.2 L967.3 577.9 L967.4 574.7 L967.6 581.9 L967.7 576.9 L967.8 571.5 L968.0 576.5 L968.1 571.2 L968.2 574.0 L968.4 579.4 L968.5 577.3 L968.6 577.1 L968.8 575.5 L968.9 577.4 L969.0 578.6 L969.2 576.5 L969.3 579.3 L969.4 580.3 L969.6 575.5 L969.7 571.9 L969.8 581.2 L970.0 575.3 L970.1 577.8 L970.2 579.1 L970.4 571.9 L970.5 577.3 L970.6 569.4 L970.8 578.3 L970.9 573.7 L971.0 576.1 L971.2 578.1 L971.3 572.9 L971.4 575.8 L971.6 572.8 L971.7 575.3 L971.8 579.4 L972.0 568.1 L972.1 574.9 L972.2 571.4 L972.4 578.6 L972.5 575.2 L972.6 581.8 L972.8 572.5 L972.9 579.2 L973.0 582.0 L973.1 575.2 L973.3 570.7 L973.4 580.9 L973.5 579.2 L973.7 577.8 L973.8 579.3 L973.9 573.4 L974.1 578.1 L974.2 577.7 L974.3 572.6 L974.5 577.8 L974.6 573.2 L974.7 578.6 L974.9 579.6 L975.0 582.0 L975.1 567.6 L975.3 576.0 L975.4 573.8 L975.5 574.9 L975.7 574.1 L975.8 574.6 L975.9 567.3 L976.1 578.8 L976.2 580.8 L976.3 578.6 L976.5 579.9 L976.6 571.8 L976.7 571.5 L976.9 578.4 L977.0 580.1 L977.1 576.0 L977.3 569.2 L977.4 585.6 L977.5 572.6 L977.7 578.8 L977.8 570.6 L977.9 578.8 L978.0 575.7 L978.2 580.5 L978.3 578.4 L978.4 569.2 L978.6 571.4 L978.7 576.2 L978.8 578.0 L979.0 582.0 L979.1 576.1 L979.2 574.7 L979.4 574.9 L979.5 574.9 L979.6 578.9 L979.8 574.8 L979.9 574.7 L980.0 569.6 L980.2 567.3 L980.3 575.1 L980.4 577.6 L980.6 574.8 L980.7 577.0 L980.8 577.5 L981.0 574.8 L981.1 578.7 L981.2 572.3 L981.4 575.0 L981.5 573.7 L981.6 575.4 L981.8 577.5 L981.9 578.4 L982.0 575.6 L982.2 576.8 L982.3 573.8 L982.4 574.7 L982.6 580.0 L982.7 574.5 L982.8 580.0 L983.0 557.5 L983.1 575.9 L983.2 582.9 L983.3 574.4 L983.5 574.2 L983.6 575.4 L983.7 576.5 L983.9 576.3 L984.0 578.7 L984.1 575.9 L984.3 577.1 L984.4 574.6 L984.5 579.6 L984.7 574.0 L984.8 574.4 L984.9 575.5 L985.1 576.7 L985.2 572.9 L985.3 581.5 L985.5 573.3 L985.6 574.1 L985.7 574.0 L985.9 573.6 L986.0 577.7 L986.1 576.2 L986.3 572.7 L986.4 573.5 L986.5 574.4 L986.7 581.2 L986.8 573.2 L986.9 570.8 L987.1 571.4 L987.2 574.5 L987.3 581.5 L987.5 571.7 L987.6 576.0 L987.7 585.3 L987.9 574.0 L988.0 581.3 L988.1 580.6 L988.3 578.0 L988.4 570.6 L988.5 577.1 L988.6 574.6 L988.8 568.8 L988.9 569.5 L989.0 574.3 L989.2 576.7 L989.3 580.7 L989.4 578.5 L989.6 574.1 L989.7 574.3 L989.8 575.4 L990.0 572.0 L990.1 578.9 L990.2 576.1 L990.4 573.1 L990.5 573.7 L990.6 571.8 L990.8 574.5 L990.9 577.2 L991.0 574.7 L991.2 580.0 L991.3 582.5 L991.4 573.9 L991.6 576.4 L991.7 575.0 L991.8 582.8 L992.0 577.6 L992.1 578.6 L992.2 579.6 L992.4 585.1 L992.5 577.6 L992.6 572.8 L992.8 574.8 L992.9 578.7 L993.0 576.4 L993.2 573.4 L993.3 587.1 L993.4 576.9 L993.6 574.3 L993.7 573.8 L993.8 569.8 L993.9 572.0 L994.1 575.3 L994.2 575.3 L994.3 573.4 L994.5 578.6 L994.6 576.7 L994.7 573.0 L994.9 568.9 L995.0 577.2 L995.1 576.7 L995.3 575.8 L995.4 571.3 L995.5 576.7 L995.7 570.9 L995.8 580.4 L995.9 577.3 L996.1 577.4 L996.2 573.5 L996.3 572.5 L996.5 582.5 L996.6 580.2 L996.7 575.3 L996.9 579.2 L997.0 582.6 L997.1 572.6 L997.3 574.7 L997.4 574.7 L997.5 578.5 L997.7 572.6 L997.8 577.6 L997.9 575.0 L998.1 580.2 L998.2 579.9 L998.3 575.8 L998.5 579.3 L998.6 574.0 L998.7 575.6 L998.9 580.2 L999.0 576.3 L999.1 577.9 L999.2 573.0 L999.4 579.0 L999.5 578.3 L999.6 571.8 L999.8 567.8 L999.9 568.7 L1000.0 576.3 L1000.2 575.6 L1000.3 570.5 L1000.4 576.9 L1000.6 580.3 L1000.7 576.0 L1000.8 574.7 L1001.0 579.6 L1001.1 582.8 L1001.2 575.7 L1001.4 573.8 L1001.5 579.3 L1001.6 576.9 L1001.8 575.5 L1001.9 573.9 L1002.0 577.6 L1002.2 574.3 L1002.3 579.7 L1002.4 577.6 L1002.6 580.2 L1002.7 571.8 L1002.8 575.8 L1003.0 579.0 L1003.1 577.5 L1003.2 577.0 L1003.4 573.4 L1003.5 582.3 L1003.6 580.1 L1003.8 577.5 L1003.9 566.2 L1004.0 567.6 L1004.2 576.4 L1004.3 573.2 L1004.4 567.9 L1004.5 576.8 L1004.7 577.3 L1004.8 571.2 L1004.9 574.0 L1005.1 573.2 L1005.2 577.8 L1005.3 568.3 L1005.5 569.1 L1005.6 573.6 L1005.7 573.1 L1005.9 583.6 L1006.0 573.2 L1006.1 576.5 L1006.3 574.0 L1006.4 573.0 L1006.5 577.0 L1006.7 582.2 L1006.8 574.2 L1006.9 578.5 L1007.1 576.9 L1007.2 577.9 L1007.3 576.9 L1007.5 584.5 L1007.6 570.8 L1007.7 596.9 L1007.9 571.2 L1008.0 567.8 L1008.1 575.4 L1008.3 582.5 L1008.4 578.9 L1008.5 580.1 L1008.7 577.4 L1008.8 575.1 L1008.9 583.2 L1009.1 574.0 L1009.2 581.2 L1009.3 574.2 L1009.5 575.8 L1009.6 576.5 L1009.7 575.6 L1009.8 577.4 L1010.0 577.7 L1010.1 581.8 L1010.2 575.4 L1010.4 568.1 L1010.5 567.5 L1010.6 570.1 L1010.8 572.5 L1010.9 577.9 L1011.0 569.6 L1011.2 575.4 L1011.3 575.5 L1011.4 576.4 L1011.6 574.9 L1011.7 576.9 L1011.8 575.5 L1012.0 579.4 L1012.1 576.7 L1012.2 566.3 L1012.4 575.5 L1012.5 576.1 L1012.6 573.1 L1012.8 572.4 L1012.9 579.5 L1013.0 576.0 L1013.2 571.6 L1013.3 574.2 L1013.4 574.7 L1013.6 569.2 L1013.7 577.9 L1013.8 574.9 L1014.0 577.3 L1014.1 569.4 L1014.2 582.8 L1014.4 577.9 L1014.5 577.3 L1014.6 572.7 L1014.8 572.9 L1014.9 569.8 L1015.0 581.4 L1015.1 572.4 L1015.3 576.4 L1015.4 577.9 L1015.5 573.2 L1015.7 578.9 L1015.8 583.4 L1015.9 576.8 L1016.1 581.2 L1016.2 577.9 L1016.3 573.9 L1016.5 574.2 L1016.6 569.2 L1016.7 576.2 L1016.9 581.4 L1017.0 578.4 L1017.1 579.1 L1017.3 580.2 L1017.4 573.8 L1017.5 578.0 L1017.7 583.2 L1017.8 572.8 L1017.9 576.0 L1018.1 574.2 L1018.2 575.2 L1018.3 573.1 L1018.5 575.5 L1018.6 570.8 L1018.7 574.0 L1018.9 574.1 L1019.0 574.1 L1019.1 581.4 L1019.3 576.4 L1019.4 576.7 L1019.5 574.9 L1019.7 581.0 L1019.8 569.4 L1019.9 575.4 L1020.1 580.5 L1020.2 582.5 L1020.3 576.9 L1020.4 576.2 L1020.6 578.7 L1020.7 575.5 L1020.8 578.4 L1021.0 573.8 L1021.1 578.7 L1021.2 576.1 L1021.4 572.1 L1021.5 565.9 L1021.6 572.5 L1021.8 577.8 L1021.9 579.3 L1022.0 573.0 L1022.2 580.5 L1022.3 577.9 L1022.4 576.2 L1022.6 579.9 L1022.7 579.8 L1022.8 577.9 L1023.0 584.3 L1023.1 581.7 L1023.2 577.7 L1023.4 575.5 L1023.5 576.9 L1023.6 583.1 L1023.8 578.0 L1023.9 573.0 L1024.0 574.0 L1024.2 576.5 L1024.3 579.6 L1024.4 573.7 L1024.6 578.4 L1024.7 580.7 L1024.8 579.3 L1025.0 570.6 L1025.1 575.3 L1025.2 571.7 L1025.4 578.1 L1025.5 572.6 L1025.6 578.6 L1025.8 576.8 L1025.9 566.5 L1026.0 573.2 L1026.1 578.2 L1026.3 576.5 L1026.4 574.9 L1026.5 571.5 L1026.7 578.1 L1026.8 583.0 L1026.9 577.3 L1027.1 576.1 L1027.2 575.8 L1027.3 571.1 L1027.5 574.9 L1027.6 573.0 L1027.7 580.5 L1027.9 574.2 L1028.0 568.0 L1028.1 514.0 L1028.3 575.1 L1028.4 575.5 L1028.5 569.1 L1028.7 579.7 L1028.8 576.5 L1028.9 574.3 L1029.1 573.2 L1029.2 577.8 L1029.3 574.8 L1029.5 577.1 L1029.6 575.5 L1029.7 576.5 L1029.9 580.4 L1030.0 576.0 L1030.1 572.5 L1030.3 579.7 L1030.4 576.8 L1030.5 573.3 L1030.7 580.0 L1030.8 575.1 L1030.9 580.0 L1031.0 571.4 L1031.2 566.8 L1031.3 567.9 L1031.4 576.6 L1031.6 572.8 L1031.7 575.2 L1031.8 575.3 L1032.0 569.5 L1032.1 580.8 L1032.2 571.5 L1032.4 575.8 L1032.5 570.1 L1032.6 574.8 L1032.8 578.1 L1032.9 574.4 L1033.0 572.6 L1033.2 575.3 L1033.3 573.5 L1033.4 577.4 L1033.6 583.7 L1033.7 571.8 L1033.8 572.6 L1034.0 574.7 L1034.1 575.0 L1034.2 571.2 L1034.4 577.0 L1034.5 577.9 L1034.6 575.9 L1034.8 570.5 L1034.9 580.5 L1035.0 570.4 L1035.2 577.6 L1035.3 579.3 L1035.4 570.1 L1035.6 575.4 L1035.7 580.0 L1035.8 576.3 L1036.0 571.3 L1036.1 570.2 L1036.2 576.5 L1036.3 573.2 L1036.5 572.0 L1036.6 577.3 L1036.7 573.4 L1036.9 574.9 L1037.0 576.8 L1037.1 576.6 L1037.3 574.4 L1037.4 574.5 L1037.5 576.8 L1037.7 576.2 L1037.8 570.2 L1037.9 573.7 L1038.1 571.1 L1038.2 569.8 L1038.3 572.2 L1038.5 565.6 L1038.6 577.6 L1038.7 571.3 L1038.9 575.6 L1039.0 567.1 L1039.1 567.7 L1039.3 581.9 L1039.4 578.1 L1039.5 571.7 L1039.7 571.2 L1039.8 571.4 L1039.9 574.5 L1040.1 572.4 L1040.2 571.7 L1040.3 574.5 L1040.5 570.2 L1040.6 583.0 L1040.7 567.3 L1040.9 578.2 L1041.0 570.4 L1041.1 575.0 L1041.3 577.6 L1041.4 572.6 L1041.5 577.6 L1041.6 577.6 L1041.8 580.2 L1041.9 574.1 L1042.0 572.1 L1042.2 570.0 L1042.3 574.6 L1042.4 569.9 L1042.6 573.9 L1042.7 574.4 L1042.8 571.8 L1043.0 569.9 L1043.1 575.3 L1043.2 574.9 L1043.4 574.6 L1043.5 573.6 L1043.6 577.5 L1043.8 570.0 L1043.9 575.5 L1044.0 572.2 L1044.2 577.2 L1044.3 572.6 L1044.4 572.4 L1044.6 575.6 L1044.7 566.1 L1044.8 572.5 L1045.0 567.0 L1045.1 570.2 L1045.2 576.6 L1045.4 575.5 L1045.5 572.3 L1045.6 573.7 L1045.8 573.8 L1045.9 575.1 L1046.0 581.0 L1046.2 574.9 L1046.3 582.7 L1046.4 572.6 L1046.6 576.9 L1046.7 576.8 L1046.8 574.9 L1047.0 573.0 L1047.1 579.6 L1047.2 580.9 L1047.3 578.2 L1047.5 582.1 L1047.6 577.9 L1047.7 567.9 L1047.9 578.2 L1048.0 571.6 L1048.1 579.5 L1048.3 573.0 L1048.4 575.4 L1048.5 574.4 L1048.7 572.0 L1048.8 567.4 L1048.9 573.5 L1049.1 573.8 L1049.2 578.1 L1049.3 572.0 L1049.5 575.2 L1049.6 571.1 L1049.7 574.5 L1049.9 567.5 L1050.0 582.1 L1050.1 575.5 L1050.3 570.9 L1050.4 575.8 L1050.5 577.5 L1050.7 575.5 L1050.8 579.8 L1050.9 574.0 L1051.1 565.0 L1051.2 570.0 L1051.3 578.8 L1051.5 577.9 L1051.6 576.1 L1051.7 570.6 L1051.9 577.8 L1052.0 577.3 L1052.1 571.1 L1052.2 571.2 L1052.4 576.1 L1052.5 579.0 L1052.6 580.7 L1052.8 577.4 L1052.9 583.3 L1053.0 571.8 L1053.2 577.1 L1053.3 572.8 L1053.4 567.4 L1053.6 570.2 L1053.7 579.2 L1053.8 571.4 L1054.0 571.0 L1054.1 577.7 L1054.2 578.5 L1054.4 575.2 L1054.5 581.0 L1054.6 569.1 L1054.8 584.2 L1054.9 579.1 L1055.0 575.9 L1055.2 575.7 L1055.3 574.2 L1055.4 573.8 L1055.6 575.7 L1055.7 570.4 L1055.8 583.2 L1056.0 574.9 L1056.1 577.7 L1056.2 574.4 L1056.4 574.0 L1056.5 578.4 L1056.6 577.4 L1056.8 571.8 L1056.9 573.5 L1057.0 577.5 L1057.2 566.9 L1057.3 565.9 L1057.4 580.6 L1057.5 573.7 L1057.7 565.1 L1057.8 571.8 L1057.9 574.0 L1058.1 575.7 L1058.2 577.0 L1058.3 575.7 L1058.5 577.0 L1058.6 572.0 L1058.7 576.4 L1058.9 576.6 L1059.0 579.5 L1059.1 575.0 L1059.3 578.3 L1059.4 575.5 L1059.5 570.8 L1059.7 573.4 L1059.8 572.8 L1059.9 573.4 L1060.1 574.6 L1060.2 575.3 L1060.3 576.0 L1060.5 571.8 L1060.6 579.0 L1060.7 569.5 L1060.9 574.6 L1061.0 577.6 L1061.1 576.6 L1061.3 577.3 L1061.4 574.0 L1061.5 577.4 L1061.7 570.2 L1061.8 577.7 L1061.9 583.5 L1062.1 577.4 L1062.2 582.4 L1062.3 574.7 L1062.5 570.4 L1062.6 572.0 L1062.7 579.7 L1062.8 577.5 L1063.0 567.5 L1063.1 573.2 L1063.2 574.4 L1063.4 570.3 L1063.5 564.8 L1063.6 569.3 L1063.8 573.8 L1063.9 573.0 L1064.0 571.9 L1064.2 576.7 L1064.3 578.4 L1064.4 574.1 L1064.6 577.9 L1064.7 574.5 L1064.8 573.8 L1065.0 565.1 L1065.1 577.5 L1065.2 574.6 L1065.4 574.8 L1065.5 572.4 L1065.6 570.0 L1065.8 576.0 L1065.9 577.2 L1066.0 580.4 L1066.2 577.6 L1066.3 571.9 L1066.4 573.8 L1066.6 577.9 L1066.7 575.4 L1066.8 573.8 L1067.0 571.9 L1067.1 576.2 L1067.2 574.8 L1067.4 580.9 L1067.5 578.3 L1067.6 567.5 L1067.8 582.3 L1067.9 575.1 L1068.0 572.9 L1068.1 575.2 L1068.3 576.8 L1068.4 573.9 L1068.5 573.7 L1068.7 574.0 L1068.8 580.9 L1068.9 574.2 L1069.1 576.9 L1069.2 575.7 L1069.3 572.7 L1069.5 571.0 L1069.6 570.0 L1069.7 575.5 L1069.9 569.9 L1070.0 568.9 L1070.1 569.1 L1070.3 568.1 L1070.4 574.0 L1070.5 574.1 L1070.7 570.2 L1070.8 578.8 L1070.9 572.6 L1071.1 575.5 L1071.2 574.8 L1071.3 580.2 L1071.5 576.9 L1071.6 573.5 L1071.7 569.9 L1071.9 569.5 L1072.0 573.7 L1072.1 574.1 L1072.3 576.6 L1072.4 571.8 L1072.5 574.3 L1072.7 571.0 L1072.8 566.5 L1072.9 573.5 L1073.1 579.2 L1073.2 576.7 L1073.3 579.0 L1073.5 578.0 L1073.6 568.3 L1073.7 572.5 L1073.8 579.3 L1074.0 570.8 L1074.1 568.5 L1074.2 574.8 L1074.4 576.0 L1074.5 574.7 L1074.6 572.3 L1074.8 570.9 L1074.9 568.8 L1075.0 568.7 L1075.2 568.8 L1075.3 568.1 L1075.4 570.9 L1075.6 579.4 L1075.7 574.0 L1075.8 572.2 L1076.0 575.0 L1076.1 569.9 L1076.2 574.9 L1076.4 577.1 L1076.5 567.9 L1076.6 570.9 L1076.8 572.7 L1076.9 570.0 L1077.0 569.4 L1077.2 572.3 L1077.3 583.2 L1077.4 576.3 L1077.6 575.4 L1077.7 577.5 L1077.8 572.9 L1078.0 569.1 L1078.1 576.2 L1078.2 578.2 L1078.4 565.9 L1078.5 575.5 L1078.6 592.6 L1078.8 572.9 L1078.9 572.2 L1079.0 576.6 L1079.1 570.8 L1079.3 575.8 L1079.4 577.5 L1079.5 573.3 L1079.7 571.0 L1079.8 576.5 L1079.9 572.7 L1080.1 574.4 L1080.2 563.1 L1080.3 576.9 L1080.5 568.7 L1080.6 574.3 L1080.7 574.7 L1080.9 571.4 L1081.0 570.7 L1081.1 569.3 L1081.3 573.0 L1081.4 576.6 L1081.5 576.4 L1081.7 572.3 L1081.8 572.1 L1081.9 525.8 L1082.1 572.8 L1082.2 570.3 L1082.3 568.5 L1082.5 573.8 L1082.6 580.3 L1082.7 579.1 L1082.9 580.1 L1083.0 568.4 L1083.1 577.9 L1083.3 569.8 L1083.4 572.4 L1083.5 568.0 L1083.7 570.8 L1083.8 575.1 L1083.9 575.5 L1084.0 574.4 L1084.2 574.1 L1084.3 576.9 L1084.4 574.9 L1084.6 568.6 L1084.7 581.5 L1084.8 573.9 L1085.0 578.4 L1085.1 574.2 L1085.2 571.6 L1085.4 575.2 L1085.5 571.9 L1085.6 581.2 L1085.8 572.6 L1085.9 577.4 L1086.0 572.6 L1086.2 574.3 L1086.3 585.1 L1086.4 578.0 L1086.6 574.2 L1086.7 569.0 L1086.8 574.0 L1087.0 574.1 L1087.1 580.6 L1087.2 569.6 L1087.4 568.1 L1087.5 575.1 L1087.6 576.0 L1087.8 581.5 L1087.9 571.8 L1088.0 564.7 L1088.2 572.4 L1088.3 570.3 L1088.4 573.1 L1088.6 579.1 L1088.7 570.0 L1088.8 580.1 L1089.0 576.1 L1089.1 574.2 L1089.2 571.8 L1089.3 573.7 L1089.5 573.8 L1089.6 578.3 L1089.7 580.3 L1089.9 575.1 L1090.0 578.1 L1090.1 580.4 L1090.3 580.2 L1090.4 577.2 L1090.5 582.5 L1090.7 580.5 L1090.8 581.7 L1090.9 574.6 L1091.1 573.7 L1091.2 567.5 L1091.3 581.1 L1091.5 577.9 L1091.6 514.0 L1091.7 576.1 L1091.9 576.5 L1092.0 568.6 L1092.1 576.6 L1092.3 579.8 L1092.4 580.4 L1092.5 573.9 L1092.7 574.0 L1092.8 580.6 L1092.9 579.1 L1093.1 573.1 L1093.2 572.9 L1093.3 577.7 L1093.5 572.8 L1093.6 572.9 L1093.7 582.1 L1093.9 576.4 L1094.0 573.5 L1094.1 577.4 L1094.3 583.4 L1094.4 576.2 L1094.5 572.2 L1094.7 568.9 L1094.8 583.6 L1094.9 564.9 L1095.0 579.4 L1095.2 571.3 L1095.3 570.2 L1095.4 571.2 L1095.6 574.4 L1095.7 579.5 L1095.8 572.5 L1096.0 577.7 L1096.1 584.8 L1096.2 550.6 L1096.4 572.2 L1096.5 567.8 L1096.6 578.4 L1096.8 569.2 L1096.9 568.7 L1097.0 568.8 L1097.2 574.9 L1097.3 579.5 L1097.4 575.5 L1097.6 583.4 L1097.7 581.4 L1097.8 574.4 L1098.0 578.6 L1098.1 575.4 L1098.2 575.2 L1098.4 567.2 L1098.5 569.7 L1098.6 575.3 L1098.8 570.0 L1098.9 577.7 L1099.0 576.0 L1099.2 571.1 L1099.3 579.5 L1099.4 575.7 L1099.6 579.8 L1099.7 574.2 L1099.8 568.2 L1100.0 577.5 L1100.1 573.7 L1100.2 578.1 L1100.3 579.0 L1100.5 579.4 L1100.6 568.9 L1100.7 565.3 L1100.9 572.7 L1101.0 577.3 L1101.1 571.8 L1101.3 575.8 L1101.4 571.4 L1101.5 573.4 L1101.7 573.4 L1101.8 572.1 L1101.9 576.8 L1102.1 576.1 L1102.2 581.2 L1102.3 576.2 L1102.5 580.0 L1102.6 575.1 L1102.7 578.2 L1102.9 574.1 L1103.0 572.7 L1103.1 580.0 L1103.3 577.7 L1103.4 578.2 L1103.5 571.6 L1103.7 567.9 L1103.8 571.2 L1103.9 575.9 L1104.1 568.8 L1104.2 580.4 L1104.3 568.7 L1104.5 577.1 L1104.6 585.4 L1104.7 564.2 L1104.9 568.4 L1105.0 578.6 L1105.1 573.9 L1105.2 575.4 L1105.4 583.0 L1105.5 580.4 L1105.6 577.3 L1105.8 572.8 L1105.9 573.8 L1106.0 570.0 L1106.2 574.4 L1106.3 565.5 L1106.4 577.5 L1106.6 573.7 L1106.7 582.2 L1106.8 579.6 L1107.0 569.6 L1107.1 578.5 L1107.2 572.7 L1107.4 575.1 L1107.5 578.9 L1107.6 576.2 L1107.8 576.9 L1107.9 576.8 L1108.0 572.0 L1108.2 572.4 L1108.3 577.2 L1108.4 578.5 L1108.6 573.9 L1108.7 575.4 L1108.8 571.0 L1109.0 564.7 L1109.1 571.8 L1109.2 575.2 L1109.4 575.8 L1109.5 578.5 L1109.6 578.7 L1109.8 579.1 L1109.9 576.7 L1110.0 576.9 L1110.2 572.4 L1110.3 576.8 L1110.4 576.1 L1110.5 576.6 L1110.7 568.9 L1110.8 573.4 L1110.9 568.4 L1111.1 572.3 L1111.2 569.6 L1111.3 576.4 L1111.5 572.7 L1111.6 565.0 L1111.7 580.3 L1111.9 571.0 L1112.0 569.0 L1112.1 574.0 L1112.3 572.7 L1112.4 570.7 L1112.5 578.3 L1112.7 574.1 L1112.8 579.2 L1112.9 578.5 L1113.1 571.7 L1113.2 576.4 L1113.3 575.3 L1113.5 574.1 L1113.6 581.5 L1113.7 568.0 L1113.9 571.3 L1114.0 573.1 L1114.1 577.4 L1114.3 576.4 L1114.4 573.8 L1114.5 574.4 L1114.7 582.8 L1114.8 573.1 L1114.9 564.5 L1115.1 583.5 L1115.2 572.2 L1115.3 574.7 L1115.5 576.6 L1115.6 570.7 L1115.7 581.0 L1115.8 575.6 L1116.0 570.4 L1116.1 577.1 L1116.2 578.0 L1116.4 575.9 L1116.5 578.1 L1116.6 575.0 L1116.8 580.0 L1116.9 572.9 L1117.0 581.4 L1117.2 573.7 L1117.3 576.8 L1117.4 586.8 L1117.6 576.5 L1117.7 580.7 L1117.8 578.3 L1118.0 570.3 L1118.1 581.0 L1118.2 580.8 L1118.4 570.7 L1118.5 576.1 L1118.6 570.4 L1118.8 575.2 L1118.9 580.1 L1119.0 576.8 L1119.2 571.6 L1119.3 572.8 L1119.4 576.6 L1119.6 576.4 L1119.7 577.0 L1119.8 578.9 L1120.0 568.8 L1120.1 576.6 L1120.2 581.1 L1120.4 578.5 L1120.5 573.7 L1120.6 574.0 L1120.8 577.1 L1120.9 579.3 L1121.0 576.5 L1121.2 583.3 L1121.3 581.8 L1121.4 573.4 L1121.5 570.8 L1121.7 575.1 L1121.8 571.7 L1121.9 574.0 L1122.1 576.5 L1122.2 568.0 L1122.3 573.9 L1122.5 557.5 L1122.6 573.6 L1122.7 574.9 L1122.9 579.9 L1123.0 576.2 L1123.1 577.1 L1123.3 584.3 L1123.4 577.2 L1123.5 577.6 L1123.7 578.2 L1123.8 583.0 L1123.9 577.8 L1124.1 576.6 L1124.2 576.0 L1124.3 580.9 L1124.5 573.8 L1124.6 581.2 L1124.7 577.2 L1124.9 571.1 L1125.0 579.1 L1125.1 578.3 L1125.3 572.0 L1125.4 577.8 L1125.5 577.4 L1125.7 575.3 L1125.8 572.0 L1125.9 585.0 L1126.1 579.5 L1126.2 580.2 L1126.3 580.5 L1126.5 579.5 L1126.6 579.5 L1126.7 574.9 L1126.8 579.6 L1127.0 575.5 L1127.1 574.4 L1127.2 578.9 L1127.4 575.5 L1127.5 569.4 L1127.6 574.7 L1127.8 578.5 L1127.9 576.2 L1128.0 579.5 L1128.2 574.8 L1128.3 572.4 L1128.4 579.1 L1128.6 576.6 L1128.7 571.4 L1128.8 577.8 L1129.0 575.0 L1129.1 579.8 L1129.2 579.0 L1129.4 577.7 L1129.5 567.2 L1129.6 577.3 L1129.8 577.7 L1129.9 577.8 L1130.0 576.3 L1130.2 573.0 L1130.3 574.8 L1130.4 567.5 L1130.6 574.7 L1130.7 569.9 L1130.8 574.4 L1131.0 573.1 L1131.1 581.1 L1131.2 576.0 L1131.4 575.7 L1131.5 576.4 L1131.6 583.8 L1131.8 572.0 L1131.9 576.9 L1132.0 592.5 L1132.1 576.4 L1132.3 576.3 L1132.4 573.8 L1132.5 580.3 L1132.7 579.0 L1132.8 574.2 L1132.9 574.8 L1133.1 576.8 L1133.2 577.5 L1133.3 578.5 L1133.5 575.5 L1133.6 570.7 L1133.7 579.4 L1133.9 569.3 L1134.0 572.0 L1134.1 577.0 L1134.3 572.2 L1134.4 581.0 L1134.5 582.0 L1134.7 580.3 L1134.8 576.8 L1134.9 576.5 L1135.1 577.2 L1135.2 574.8 L1135.3 583.5 L1135.5 573.3 L1135.6 580.8 L1135.7 577.8 L1135.9 576.8 L1136.0 579.7 L1136.1 580.6 L1136.3 579.2 L1136.4 575.3 L1136.5 572.9 L1136.7 573.0 L1136.8 579.1 L1136.9 578.3 L1137.0 578.8 L1137.2 573.5 L1137.3 583.2 L1137.4 570.5 L1137.6 577.2 L1137.7 578.3 L1137.8 574.0 L1138.0 571.3 L1138.1 574.0 L1138.2 571.2 L1138.4 574.8 L1138.5 570.6 L1138.6 570.5 L1138.8 575.8 L1138.9 569.8 L1139.0 574.7 L1139.2 580.9 L1139.3 514.0 L1139.4 576.5 L1139.6 572.4 L1139.7 580.6 L1139.8 572.9 L1140.0 574.1 L1140.1 574.4 L1140.2 584.1 L1140.4 575.9 L1140.5 573.0 L1140.6 578.5 L1140.8 575.2 L1140.9 584.8 L1141.0 573.0 L1141.2 578.2 L1141.3 572.2 L1141.4 582.8 L1141.6 571.5 L1141.7 576.6 L1141.8 572.5 L1142.0 579.3 L1142.1 578.1 L1142.2 567.0 L1142.3 579.0 L1142.5 578.5 L1142.6 576.9 L1142.7 579.8 L1142.9 571.2 L1143.0 566.1 L1143.1 578.6 L1143.3 583.5 L1143.4 571.3 L1143.5 571.6 L1143.7 572.7 L1143.8 571.4 L1143.9 579.3 L1144.1 576.6 L1144.2 581.4 L1144.3 581.5 L1144.5 572.2 L1144.6 578.6 L1144.7 567.1 L1144.9 575.7 L1145.0 578.5 L1145.1 573.0 L1145.3 569.1 L1145.4 574.2 L1145.5 580.8 L1145.7 574.7 L1145.8 570.8 L1145.9 578.1 L1146.1 579.2 L1146.2 572.2 L1146.3 575.6 L1146.5 580.5 L1146.6 577.7 L1146.7 579.1 L1146.9 565.0 L1147.0 575.8 L1147.1 571.7 L1147.3 573.5 L1147.4 582.3 L1147.5 574.7 L1147.7 572.8 L1147.8 574.5 L1147.9 572.2 L1148.0 578.4 L1148.2 580.0 L1148.3 572.6 L1148.4 580.4 L1148.6 584.7 L1148.7 572.3 L1148.8 579.1 L1149.0 577.5 L1149.1 581.7 L1149.2 581.4 L1149.4 580.8 L1149.5 577.7 L1149.6 574.8 L1149.8 585.2 L1149.9 573.3 L1150.0 580.9 L1150.2 580.4 L1150.3 573.6 L1150.4 576.6 L1150.6 582.2 L1150.7 569.1 L1150.8 579.6 L1151.0 575.3 L1151.1 575.4 L1151.2 570.7 L1151.4 578.0 L1151.5 572.3 L1151.6 579.1 L1151.8 571.8 L1151.9 579.1 L1152.0 577.6 L1152.2 568.8 L1152.3 574.9 L1152.4 575.7 L1152.6 567.4 L1152.7 574.7 L1152.8 579.3 L1153.0 573.2 L1153.1 580.7 L1153.2 571.6 L1153.3 571.3 L1153.5 578.2 L1153.6 578.4 L1153.7 575.3 L1153.9 575.9 L1154.0 579.7 L1154.1 573.7 L1154.3 583.8 L1154.4 581.2 L1154.5 577.4 L1154.7 576.9 L1154.8 574.6 L1154.9 580.6 L1155.1 573.5 L1155.2 576.4 L1155.3 578.3 L1155.5 581.0 L1155.6 580.3 L1155.7 574.2 L1155.9 579.4 L1156.0 575.4 L1156.1 571.4 L1156.3 571.5 L1156.4 569.5 L1156.5 576.7 L1156.7 579.7 L1156.8 571.5 L1156.9 574.2 L1157.1 571.0 L1157.2 575.3 L1157.3 570.7 L1157.5 572.0 L1157.6 572.5 L1157.7 573.3 L1157.9 573.7 L1158.0 574.3 L1158.1 574.3 L1158.2 571.3 L1158.4 577.1 L1158.5 568.4 L1158.6 575.5 L1158.8 571.2 L1158.9 575.4 L1159.0 576.0 L1159.2 567.1 L1159.3 576.2 L1159.4 579.9 L1159.6 577.7 L1159.7 576.1 L1159.8 566.5 L1160.0 574.0 L1160.1 571.2 L1160.2 578.7 L1160.4 573.4 L1160.5 572.1 L1160.6 567.7 L1160.8 577.4 L1160.9 572.3 L1161.0 573.5 L1161.2 578.6 L1161.3 574.7 L1161.4 575.6 L1161.6 583.6 L1161.7 572.2 L1161.8 572.4 L1162.0 576.2 L1162.1 579.7 L1162.2 568.7 L1162.4 573.4 L1162.5 570.4 L1162.6 568.9 L1162.8 576.4 L1162.9 571.2 L1163.0 575.3 L1163.2 574.6 L1163.3 574.6 L1163.4 574.3 L1163.5 569.9 L1163.7 573.8 L1163.8 574.8 L1163.9 575.3 L1164.1 572.9 L1164.2 577.7 L1164.3 576.1 L1164.5 574.4 L1164.6 576.4 L1164.7 574.6 L1164.9 576.5 L1165.0 566.3 L1165.1 568.9 L1165.3 572.4 L1165.4 574.3 L1165.5 565.6 L1165.7 572.8 L1165.8 574.4 L1165.9 572.9 L1166.1 572.9 L1166.2 568.6 L1166.3 574.1 L1166.5 565.9 L1166.6 577.5 L1166.7 571.3 L1166.9 577.9 L1167.0 567.0 L1167.1 575.3 L1167.3 574.3 L1167.4 570.4 L1167.5 569.1 L1167.7 578.4 L1167.8 575.4 L1167.9 579.5 L1168.1 573.5 L1168.2 574.4 L1168.3 575.4 L1168.5 576.7 L1168.6 575.6 L1168.7 577.0 L1168.8 572.0 L1169.0 568.2 L1169.1 581.6 L1169.2 574.5 L1169.4 575.7 L1169.5 572.2 L1169.6 577.8 L1169.8 574.7 L1169.9 578.2 L1170.0 571.4 L1170.2 573.7 L1170.3 574.8 L1170.4 572.7 L1170.6 575.1 L1170.7 580.2 L1170.8 571.9 L1171.0 573.1 L1171.1 574.8 L1171.2 570.4 L1171.4 569.5 L1171.5 578.5 L1171.6 577.3 L1171.8 568.2 L1171.9 568.7 L1172.0 577.2 L1172.2 578.9 L1172.3 576.8 L1172.4 576.3 L1172.6 580.5 L1172.7 574.2 L1172.8 579.4 L1173.0 579.1 L1173.1 570.8 L1173.2 577.1 L1173.4 574.7 L1173.5 572.0 L1173.6 571.3 L1173.8 575.8 L1173.9 574.3 L1174.0 577.7 L1174.2 567.7 L1174.3 572.0 L1174.4 578.8 L1174.5 574.5 L1174.7 571.8 L1174.8 572.7 L1174.9 567.5 L1175.1 569.3 L1175.2 576.7 L1175.3 575.0 L1175.5 579.6 L1175.6 583.6 L1175.7 574.1 L1175.9 564.2 L1176.0 574.3 L1176.1 582.9 L1176.3 577.3 L1176.4 574.3 L1176.5 579.6 L1176.7 578.1 L1176.8 576.2 L1176.9 573.5 L1177.1 575.4 L1177.2 578.3 L1177.3 571.8 L1177.5 576.9 L1177.6 576.8 L1177.7 580.2 L1177.9 577.9 L1178.0 572.3 L1178.1 581.2 L1178.3 575.2 L1178.4 572.1 L1178.5 576.4 L1178.7 574.0 L1178.8 579.3 L1178.9 569.8 L1179.1 570.6 L1179.2 574.0 L1179.3 581.8 L1179.5 579.0 L1179.6 571.1 L1179.7 568.3 L1179.8 573.8 L1180.0 570.1 L1180.1 577.3 L1180.2 575.7 L1180.4 574.9 L1180.5 573.3 L1180.6 580.9 L1180.8 571.3 L1180.9 569.8 L1181.0 579.4 L1181.2 580.2 L1181.3 573.6 L1181.4 577.5 L1181.6 584.2 L1181.7 571.8 L1181.8 574.3 L1182.0 576.8 L1182.1 566.7 L1182.2 574.3 L1182.4 640.0 L1182.5 568.2 L1182.6 640.0 L1182.8 640.0 L1182.9 640.0 L1183.0 640.0" fill="none" stroke="#0000ff" stroke-width="1.5" stroke-linejoin="round"/></svg>
<rect x="911" y="517" width="274" height="120" fill="none" stroke="#000" stroke-width="1.5" stroke-linejoin="miter"/>
<line x1="911.8" y1="637" x2="911.8" y2="643.5" stroke="#000" stroke-width="1.5"/>
<text x="908.95" y="659.5" font-size="10.1" textLength="5.7" lengthAdjust="spacingAndGlyphs" fill="#000">0</text>
<line x1="978.05" y1="637" x2="978.05" y2="643.5" stroke="#000" stroke-width="1.5"/>
<text x="969.04" y="659.5" font-size="10.1" textLength="18.01" lengthAdjust="spacingAndGlyphs" fill="#000">500</text>
<line x1="1044.3" y1="637" x2="1044.3" y2="643.5" stroke="#000" stroke-width="1.5"/>
<text x="1031.96" y="659.5" font-size="10.1" textLength="24.28" lengthAdjust="spacingAndGlyphs" fill="#000">1000</text>
<line x1="1110.55" y1="637" x2="1110.55" y2="643.5" stroke="#000" stroke-width="1.5"/>
<text x="1098.21" y="659.5" font-size="10.1" textLength="24.28" lengthAdjust="spacingAndGlyphs" fill="#000">1500</text>
<line x1="1176.8" y1="637" x2="1176.8" y2="643.5" stroke="#000" stroke-width="1.5"/>
<text x="1164.56" y="659.5" font-size="10.1" textLength="24.36" lengthAdjust="spacingAndGlyphs" fill="#000">2000</text>
<line x1="911" y1="624.2" x2="904.5" y2="624.2" stroke="#000" stroke-width="1.5"/>
<text x="877.34" y="627.8" font-size="10.1" textLength="18.09" lengthAdjust="spacingAndGlyphs" fill="#000">100</text>
<line x1="911" y1="599.85" x2="904.5" y2="599.85" stroke="#000" stroke-width="1.5"/>
<text x="877.34" y="603.45" font-size="10.1" textLength="18.09" lengthAdjust="spacingAndGlyphs" fill="#000">150</text>
<line x1="911" y1="575.5" x2="904.5" y2="575.5" stroke="#000" stroke-width="1.5"/>
<text x="877.26" y="579.1" font-size="10.1" textLength="18.17" lengthAdjust="spacingAndGlyphs" fill="#000">200</text>
<line x1="911" y1="551.15" x2="904.5" y2="551.15" stroke="#000" stroke-width="1.5"/>
<text x="877.26" y="554.75" font-size="10.1" textLength="18.17" lengthAdjust="spacingAndGlyphs" fill="#000">250</text>
<line x1="911" y1="526.8" x2="904.5" y2="526.8" stroke="#000" stroke-width="1.5"/>
<text x="877.42" y="530.4" font-size="10.1" textLength="18" lengthAdjust="spacingAndGlyphs" fill="#000">300</text>
<text x="1044.52" y="677.5" font-size="10.4" textLength="6.94" lengthAdjust="spacingAndGlyphs" fill="#000">X</text>
<text transform="translate(866 577.7) rotate(-90)" x="-17.34" y="0" font-size="10.4" textLength="34.6" lengthAdjust="spacingAndGlyphs" fill="#000">counts</text>
<text transform="translate(1194.3 575.2) rotate(90)" x="-19.37" y="0" font-size="10.4" textLength="38.36" lengthAdjust="spacingAndGlyphs" fill="#000">cut in x</text>
<rect x="1115.8" y="519.8" width="65.8" height="16.2" rx="2" ry="2" fill="#fff" fill-opacity="0.8" stroke="#cccccc" stroke-width="1"/>
<line x1="1118" y1="527.7" x2="1140.8" y2="527.7" stroke="#0000ff" stroke-width="1.5"/>
<text x="1144.37" y="531" font-size="10.4" textLength="33" lengthAdjust="spacingAndGlyphs" fill="#000">y=550</text>
<svg x="911.0" y="689.0" width="274.0" height="120.0" viewBox="911.0 689.0 274.0 120.0" overflow="hidden"><path d="M913.5 695.8 L913.7 812.0 L914.0 690.9 L914.2 686.0 L914.5 698.7 L914.7 695.9 L915.0 697.5 L915.2 694.6 L915.5 693.3 L915.7 690.2 L915.9 701.3 L916.2 688.9 L916.4 701.2 L916.7 695.3 L916.9 691.1 L917.2 693.3 L917.4 701.4 L917.7 700.3 L917.9 699.2 L918.1 697.3 L918.4 691.5 L918.6 703.4 L918.9 694.9 L919.1 694.3 L919.4 694.6 L919.6 695.1 L919.8 690.1 L920.1 695.2 L920.3 693.4 L920.6 694.9 L920.8 689.0 L921.1 707.1 L921.3 691.7 L921.6 699.2 L921.8 699.4 L922.0 702.8 L922.3 707.3 L922.5 700.1 L922.8 701.7 L923.0 696.0 L923.3 705.7 L923.5 691.6 L923.8 697.3 L924.0 700.0 L924.2 702.3 L924.5 702.8 L924.7 704.5 L925.0 701.7 L925.2 699.2 L925.5 700.1 L925.7 706.3 L926.0 700.7 L926.2 703.9 L926.4 698.9 L926.7 690.7 L926.9 696.8 L927.2 701.5 L927.4 707.9 L927.7 707.0 L927.9 708.4 L928.2 696.8 L928.4 704.2 L928.6 700.2 L928.9 703.7 L929.1 700.3 L929.4 694.0 L929.6 704.3 L929.9 702.7 L930.1 705.1 L930.3 697.0 L930.6 706.4 L930.8 707.1 L931.1 708.4 L931.3 708.6 L931.6 699.6 L931.8 689.5 L932.1 707.0 L932.3 697.6 L932.5 701.1 L932.8 707.9 L933.0 704.0 L933.3 703.9 L933.5 706.2 L933.8 693.6 L934.0 712.4 L934.3 701.4 L934.5 701.8 L934.7 706.3 L935.0 702.9 L935.2 695.8 L935.5 703.2 L935.7 702.0 L936.0 712.9 L936.2 714.2 L936.5 697.3 L936.7 693.5 L936.9 700.0 L937.2 700.0 L937.4 711.9 L937.7 705.8 L937.9 722.3 L938.2 708.3 L938.4 700.9 L938.7 709.7 L938.9 709.2 L939.1 715.4 L939.4 707.0 L939.6 705.9 L939.9 710.0 L940.1 710.2 L940.4 697.7 L940.6 712.9 L940.9 712.3 L941.1 711.3 L941.3 701.7 L941.6 697.4 L941.8 706.2 L942.1 711.5 L942.3 710.3 L942.6 703.2 L942.8 712.9 L943.0 701.6 L943.3 702.0 L943.5 708.7 L943.8 706.1 L944.0 705.7 L944.3 702.0 L944.5 714.8 L944.8 704.1 L945.0 711.9 L945.2 714.0 L945.5 709.9 L945.7 711.6 L946.0 715.6 L946.2 718.7 L946.5 715.7 L946.7 704.2 L947.0 701.9 L947.2 708.5 L947.4 710.7 L947.7 714.5 L947.9 712.6 L948.2 711.0 L948.4 717.8 L948.7 717.5 L948.9 712.4 L949.2 714.6 L949.4 718.4 L949.6 711.5 L949.9 714.9 L950.1 708.8 L950.4 714.0 L950.6 715.6 L950.9 713.7 L951.1 715.3 L951.4 717.9 L951.6 716.8 L951.8 711.3 L952.1 712.0 L952.3 709.0 L952.6 723.7 L952.8 686.0 L953.1 717.8 L953.3 715.1 L953.5 718.3 L953.8 718.8 L954.0 712.6 L954.3 715.7 L954.5 722.4 L954.8 710.4 L955.0 712.2 L955.3 720.0 L955.5 713.3 L955.7 721.1 L956.0 712.1 L956.2 718.8 L956.5 721.8 L956.7 719.9 L957.0 721.9 L957.2 717.4 L957.5 717.6 L957.7 718.4 L957.9 721.4 L958.2 743.8 L958.4 718.5 L958.7 728.4 L958.9 738.9 L959.2 713.9 L959.4 718.2 L959.7 721.5 L959.9 720.6 L960.1 720.5 L960.4 722.6 L960.6 722.9 L960.9 724.7 L961.1 714.5 L961.4 720.4 L961.6 713.0 L961.9 721.8 L962.1 720.3 L962.3 721.6 L962.6 718.6 L962.8 716.9 L963.1 719.9 L963.3 724.4 L963.6 725.0 L963.8 713.2 L964.0 722.7 L964.3 722.9 L964.5 714.4 L964.8 716.3 L965.0 719.1 L965.3 721.5 L965.5 710.4 L965.8 720.0 L966.0 719.3 L966.2 722.9 L966.5 729.0 L966.7 728.7 L967.0 720.3 L967.2 720.5 L967.5 723.6 L967.7 728.2 L968.0 729.6 L968.2 724.2 L968.4 729.8 L968.7 718.4 L968.9 717.2 L969.2 709.1 L969.4 718.7 L969.7 725.9 L969.9 727.3 L970.2 739.9 L970.4 726.1 L970.6 724.1 L970.9 718.6 L971.1 729.4 L971.4 720.6 L971.6 722.4 L971.9 720.3 L972.1 716.5 L972.4 728.8 L972.6 725.9 L972.8 730.5 L973.1 715.9 L973.3 717.5 L973.6 720.2 L973.8 729.8 L974.1 723.2 L974.3 725.2 L974.5 723.7 L974.8 725.1 L975.0 721.7 L975.3 726.2 L975.5 720.1 L975.8 723.2 L976.0 725.8 L976.3 725.0 L976.5 726.6 L976.7 720.6 L977.0 725.9 L977.2 723.2 L977.5 726.6 L977.7 732.0 L978.0 720.4 L978.2 730.0 L978.5 721.6 L978.7 722.9 L978.9 733.0 L979.2 729.6 L979.4 727.6 L979.7 729.1 L979.9 730.9 L980.2 721.6 L980.4 726.4 L980.7 723.5 L980.9 727.5 L981.1 723.9 L981.4 729.1 L981.6 725.7 L981.9 722.8 L982.1 704.3 L982.4 748.5 L982.6 731.0 L982.9 725.0 L983.1 747.7 L983.3 727.2 L983.6 729.7 L983.8 723.4 L984.1 714.0 L984.3 727.6 L984.6 724.6 L984.8 724.4 L985.1 738.8 L985.3 725.8 L985.5 729.9 L985.8 719.7 L986.0 716.0 L986.3 730.4 L986.5 727.7 L986.8 725.9 L987.0 729.5 L987.2 727.1 L987.5 733.5 L987.7 728.1 L988.0 723.3 L988.2 717.5 L988.5 723.8 L988.7 731.4 L989.0 721.6 L989.2 722.4 L989.4 719.4 L989.7 722.3 L989.9 728.2 L990.2 726.4 L990.4 726.9 L990.7 726.4 L990.9 727.0 L991.2 731.8 L991.4 738.3 L991.6 731.4 L991.9 739.3 L992.1 728.0 L992.4 728.4 L992.6 736.6 L992.9 726.2 L993.1 724.4 L993.4 728.3 L993.6 720.7 L993.8 719.8 L994.1 734.9 L994.3 724.0 L994.6 727.0 L994.8 727.2 L995.1 724.8 L995.3 732.9 L995.6 732.4 L995.8 733.7 L996.0 733.4 L996.3 738.5 L996.5 725.3 L996.8 735.1 L997.0 727.3 L997.3 730.5 L997.5 728.4 L997.7 739.6 L998.0 734.3 L998.2 733.3 L998.5 730.5 L998.7 733.6 L999.0 726.3 L999.2 731.3 L999.5 731.0 L999.7 731.1 L999.9 727.8 L1000.2 733.7 L1000.4 726.0 L1000.7 729.4 L1000.9 731.0 L1001.2 731.6 L1001.4 729.4 L1001.7 727.1 L1001.9 727.5 L1002.1 730.4 L1002.4 728.1 L1002.6 731.9 L1002.9 726.5 L1003.1 732.8 L1003.4 742.9 L1003.6 726.4 L1003.9 732.5 L1004.1 738.8 L1004.3 734.2 L1004.6 737.6 L1004.8 723.2 L1005.1 731.1 L1005.3 741.3 L1005.6 731.1 L1005.8 735.8 L1006.1 724.6 L1006.3 739.2 L1006.5 745.1 L1006.8 734.0 L1007.0 740.1 L1007.3 736.5 L1007.5 745.0 L1007.8 732.6 L1008.0 726.7 L1008.2 744.2 L1008.5 729.3 L1008.7 737.9 L1009.0 723.8 L1009.2 733.2 L1009.5 736.4 L1009.7 730.2 L1010.0 733.1 L1010.2 738.7 L1010.4 731.6 L1010.7 738.5 L1010.9 744.8 L1011.2 726.3 L1011.4 750.6 L1011.7 739.4 L1011.9 734.9 L1012.2 744.2 L1012.4 743.3 L1012.6 739.3 L1012.9 751.2 L1013.1 736.7 L1013.4 731.7 L1013.6 739.5 L1013.9 734.9 L1014.1 734.5 L1014.4 742.8 L1014.6 736.5 L1014.8 742.3 L1015.1 732.6 L1015.3 735.7 L1015.6 737.9 L1015.8 744.6 L1016.1 737.6 L1016.3 742.0 L1016.6 734.9 L1016.8 732.8 L1017.0 742.5 L1017.3 734.1 L1017.5 735.2 L1017.8 741.7 L1018.0 741.5 L1018.3 740.4 L1018.5 740.5 L1018.8 738.5 L1019.0 742.8 L1019.2 741.4 L1019.5 740.1 L1019.7 731.9 L1020.0 732.2 L1020.2 721.1 L1020.5 729.7 L1020.7 739.9 L1020.9 737.9 L1021.2 735.5 L1021.4 738.5 L1021.7 728.2 L1021.9 738.9 L1022.2 745.9 L1022.4 733.8 L1022.7 742.2 L1022.9 759.3 L1023.1 754.9 L1023.4 735.5 L1023.6 736.5 L1023.9 736.6 L1024.1 735.8 L1024.4 732.4 L1024.6 735.2 L1024.9 736.2 L1025.1 755.2 L1025.3 742.6 L1025.6 735.8 L1025.8 739.1 L1026.1 747.5 L1026.3 739.3 L1026.6 742.0 L1026.8 745.2 L1027.1 739.1 L1027.3 743.2 L1027.5 749.0 L1027.8 746.8 L1028.0 732.8 L1028.3 748.8 L1028.5 740.4 L1028.8 738.6 L1029.0 738.5 L1029.3 747.6 L1029.5 743.2 L1029.7 741.0 L1030.0 736.6 L1030.2 744.9 L1030.5 747.5 L1030.7 737.0 L1031.0 736.5 L1031.2 740.1 L1031.4 744.9 L1031.7 740.0 L1031.9 741.5 L1032.2 738.0 L1032.4 748.2 L1032.7 741.6 L1032.9 742.9 L1033.2 747.6 L1033.4 741.2 L1033.6 812.0 L1033.9 744.3 L1034.1 740.4 L1034.4 749.3 L1034.6 742.6 L1034.9 740.3 L1035.1 741.1 L1035.4 737.2 L1035.6 748.4 L1035.8 749.9 L1036.1 741.4 L1036.3 740.4 L1036.6 732.3 L1036.8 739.7 L1037.1 746.9 L1037.3 738.8 L1037.6 746.9 L1037.8 750.0 L1038.0 730.1 L1038.3 741.3 L1038.5 739.4 L1038.8 740.2 L1039.0 734.1 L1039.3 741.6 L1039.5 737.1 L1039.8 748.0 L1040.0 746.7 L1040.2 736.2 L1040.5 736.0 L1040.7 740.7 L1041.0 742.1 L1041.2 742.4 L1041.5 746.6 L1041.7 735.8 L1041.9 740.1 L1042.2 740.9 L1042.4 741.6 L1042.7 742.9 L1042.9 741.0 L1043.2 686.0 L1043.4 749.3 L1043.7 741.1 L1043.9 733.0 L1044.1 746.2 L1044.4 744.4 L1044.6 739.4 L1044.9 739.2 L1045.1 740.8 L1045.4 751.8 L1045.6 741.5 L1045.9 749.8 L1046.1 748.3 L1046.3 741.4 L1046.6 745.6 L1046.8 740.2 L1047.1 728.9 L1047.3 740.5 L1047.6 740.8 L1047.8 748.7 L1048.1 757.3 L1048.3 749.7 L1048.5 747.1 L1048.8 749.9 L1049.0 747.9 L1049.3 745.7 L1049.5 749.6 L1049.8 751.7 L1050.0 751.5 L1050.3 742.7 L1050.5 744.7 L1050.7 740.1 L1051.0 740.1 L1051.2 746.9 L1051.5 742.0 L1051.7 752.4 L1052.0 734.3 L1052.2 739.7 L1052.4 746.6 L1052.7 751.3 L1052.9 743.8 L1053.2 754.9 L1053.4 749.6 L1053.7 742.3 L1053.9 745.6 L1054.2 748.4 L1054.4 741.5 L1054.6 751.3 L1054.9 744.9 L1055.1 748.8 L1055.4 750.6 L1055.6 744.3 L1055.9 751.4 L1056.1 737.4 L1056.4 749.6 L1056.6 737.2 L1056.8 752.3 L1057.1 744.1 L1057.3 753.0 L1057.6 753.7 L1057.8 746.5 L1058.1 744.1 L1058.3 753.7 L1058.6 741.8 L1058.8 751.5 L1059.0 747.1 L1059.3 720.3 L1059.5 745.0 L1059.8 756.8 L1060.0 740.2 L1060.3 745.5 L1060.5 750.4 L1060.8 753.4 L1061.0 756.7 L1061.2 755.2 L1061.5 746.0 L1061.7 750.4 L1062.0 754.4 L1062.2 751.5 L1062.5 741.5 L1062.7 750.8 L1063.0 752.1 L1063.2 742.8 L1063.4 747.2 L1063.7 749.4 L1063.9 752.6 L1064.2 756.9 L1064.4 767.9 L1064.7 752.3 L1064.9 751.2 L1065.1 748.5 L1065.4 747.6 L1065.6 749.3 L1065.9 749.4 L1066.1 755.5 L1066.4 761.2 L1066.6 753.3 L1066.9 755.6 L1067.1 754.2 L1067.3 752.4 L1067.6 757.3 L1067.8 756.7 L1068.1 751.9 L1068.3 751.0 L1068.6 754.8 L1068.8 749.3 L1069.1 752.9 L1069.3 756.9 L1069.5 752.4 L1069.8 743.0 L1070.0 755.5 L1070.3 746.6 L1070.5 745.7 L1070.8 745.2 L1071.0 756.6 L1071.3 742.9 L1071.5 752.3 L1071.7 754.2 L1072.0 754.1 L1072.2 750.2 L1072.5 753.0 L1072.7 754.2 L1073.0 747.1 L1073.2 757.0 L1073.5 758.7 L1073.7 751.3 L1073.9 750.3 L1074.2 748.5 L1074.4 759.2 L1074.7 748.8 L1074.9 751.8 L1075.2 745.6 L1075.4 760.4 L1075.6 753.3 L1075.9 755.8 L1076.1 762.3 L1076.4 758.2 L1076.6 749.3 L1076.9 757.1 L1077.1 758.4 L1077.4 750.8 L1077.6 750.3 L1077.8 750.4 L1078.1 759.1 L1078.3 755.6 L1078.6 750.4 L1078.8 758.7 L1079.1 759.2 L1079.3 751.6 L1079.6 748.1 L1079.8 761.4 L1080.0 768.5 L1080.3 763.0 L1080.5 760.9 L1080.8 756.7 L1081.0 753.1 L1081.3 756.9 L1081.5 759.7 L1081.8 755.6 L1082.0 761.1 L1082.2 756.7 L1082.5 759.7 L1082.7 743.6 L1083.0 752.7 L1083.2 760.8 L1083.5 761.7 L1083.7 759.0 L1084.0 764.9 L1084.2 760.5 L1084.4 760.6 L1084.7 752.8 L1084.9 759.2 L1085.2 761.0 L1085.4 763.8 L1085.7 763.0 L1085.9 757.7 L1086.1 758.5 L1086.4 751.9 L1086.6 760.6 L1086.9 752.4 L1087.1 756.4 L1087.4 757.7 L1087.6 767.5 L1087.9 764.0 L1088.1 754.2 L1088.3 751.0 L1088.6 756.9 L1088.8 754.2 L1089.1 759.9 L1089.3 759.8 L1089.6 761.3 L1089.8 753.3 L1090.1 756.5 L1090.3 759.3 L1090.5 759.8 L1090.8 755.5 L1091.0 756.7 L1091.3 762.4 L1091.5 750.0 L1091.8 757.1 L1092.0 758.4 L1092.3 751.3 L1092.5 753.5 L1092.7 758.9 L1093.0 755.9 L1093.2 763.8 L1093.5 761.7 L1093.7 769.7 L1094.0 752.7 L1094.2 768.0 L1094.5 755.4 L1094.7 762.8 L1094.9 763.6 L1095.2 759.8 L1095.4 757.6 L1095.7 755.9 L1095.9 750.3 L1096.2 757.2 L1096.4 754.7 L1096.7 761.9 L1096.9 755.6 L1097.1 758.3 L1097.4 761.4 L1097.6 759.6 L1097.9 759.5 L1098.1 758.3 L1098.4 757.3 L1098.6 749.3 L1098.8 762.9 L1099.1 755.7 L1099.3 767.6 L1099.6 762.4 L1099.8 751.8 L1100.1 772.6 L1100.3 764.8 L1100.6 756.1 L1100.8 767.6 L1101.0 746.9 L1101.3 772.2 L1101.5 752.6 L1101.8 752.1 L1102.0 755.2 L1102.3 760.8 L1102.5 758.0 L1102.8 764.2 L1103.0 755.9 L1103.2 765.3 L1103.5 761.2 L1103.7 755.1 L1104.0 765.4 L1104.2 761.8 L1104.5 759.3 L1104.7 766.6 L1105.0 754.5 L1105.2 758.5 L1105.4 767.6 L1105.7 760.5 L1105.9 764.1 L1106.2 763.5 L1106.4 760.0 L1106.7 763.9 L1106.9 758.0 L1107.2 764.0 L1107.4 755.8 L1107.6 760.8 L1107.9 742.5 L1108.1 763.4 L1108.4 763.2 L1108.6 766.4 L1108.9 758.1 L1109.1 756.4 L1109.3 750.7 L1109.6 754.8 L1109.8 759.9 L1110.1 762.2 L1110.3 759.3 L1110.6 761.4 L1110.8 754.2 L1111.1 756.8 L1111.3 765.5 L1111.5 764.9 L1111.8 754.9 L1112.0 760.1 L1112.3 762.8 L1112.5 756.0 L1112.8 763.7 L1113.0 763.3 L1113.3 764.2 L1113.5 771.6 L1113.7 757.9 L1114.0 768.1 L1114.2 765.0 L1114.5 766.0 L1114.7 758.9 L1115.0 762.8 L1115.2 762.5 L1115.5 770.8 L1115.7 763.1 L1115.9 770.0 L1116.2 761.4 L1116.4 761.2 L1116.7 763.1 L1116.9 753.2 L1117.2 760.6 L1117.4 760.4 L1117.7 762.7 L1117.9 764.4 L1118.1 758.8 L1118.4 758.3 L1118.6 770.1 L1118.9 758.7 L1119.1 761.4 L1119.4 759.3 L1119.6 761.8 L1119.8 770.2 L1120.1 770.0 L1120.3 755.5 L1120.6 771.2 L1120.8 771.5 L1121.1 768.0 L1121.3 766.5 L1121.6 773.8 L1121.8 776.1 L1122.0 772.8 L1122.3 763.8 L1122.5 765.5 L1122.8 766.5 L1123.0 748.4 L1123.3 762.6 L1123.5 775.9 L1123.8 767.2 L1124.0 769.9 L1124.2 771.9 L1124.5 768.7 L1124.7 766.7 L1125.0 767.5 L1125.2 773.4 L1125.5 768.8 L1125.7 756.7 L1126.0 771.8 L1126.2 775.0 L1126.4 765.5 L1126.7 764.1 L1126.9 764.8 L1127.2 772.6 L1127.4 762.4 L1127.7 771.2 L1127.9 773.0 L1128.2 770.6 L1128.4 768.3 L1128.6 764.4 L1128.9 764.9 L1129.1 768.2 L1129.4 743.4 L1129.6 766.7 L1129.9 764.0 L1130.1 775.3 L1130.3 776.2 L1130.6 764.9 L1130.8 775.6 L1131.1 770.4 L1131.3 769.5 L1131.6 771.5 L1131.8 771.4 L1132.1 762.5 L1132.3 781.7 L1132.5 765.2 L1132.8 758.4 L1133.0 769.6 L1133.3 769.9 L1133.5 766.4 L1133.8 761.1 L1134.0 775.9 L1134.3 769.8 L1134.5 771.2 L1134.7 767.7 L1135.0 769.8 L1135.2 767.4 L1135.5 772.8 L1135.7 770.6 L1136.0 774.2 L1136.2 774.2 L1136.5 771.8 L1136.7 771.9 L1136.9 777.0 L1137.2 763.7 L1137.4 772.1 L1137.7 778.3 L1137.9 766.3 L1138.2 775.4 L1138.4 769.4 L1138.7 772.0 L1138.9 770.8 L1139.1 771.3 L1139.4 775.0 L1139.6 772.1 L1139.9 762.5 L1140.1 783.4 L1140.4 772.2 L1140.6 770.5 L1140.9 777.8 L1141.1 779.5 L1141.3 762.4 L1141.6 774.8 L1141.8 762.9 L1142.1 770.5 L1142.3 772.8 L1142.6 770.9 L1142.8 770.2 L1143.0 767.7 L1143.3 771.4 L1143.5 772.9 L1143.8 772.8 L1144.0 767.1 L1144.3 769.8 L1144.5 778.7 L1144.8 777.0 L1145.0 772.4 L1145.2 777.1 L1145.5 775.9 L1145.7 778.8 L1146.0 775.5 L1146.2 753.9 L1146.5 769.5 L1146.7 774.4 L1147.0 773.7 L1147.2 774.9 L1147.4 759.0 L1147.7 769.8 L1147.9 772.3 L1148.2 777.2 L1148.4 788.6 L1148.7 775.6 L1148.9 774.1 L1149.2 765.6 L1149.4 781.8 L1149.6 765.8 L1149.9 776.4 L1150.1 771.7 L1150.4 787.6 L1150.6 774.6 L1150.9 777.0 L1151.1 772.1 L1151.4 775.0 L1151.6 781.1 L1151.8 770.9 L1152.1 772.2 L1152.3 772.7 L1152.6 770.8 L1152.8 770.4 L1153.1 775.9 L1153.3 776.3 L1153.5 782.6 L1153.8 769.3 L1154.0 772.5 L1154.3 775.5 L1154.5 778.1 L1154.8 775.9 L1155.0 776.0 L1155.3 777.8 L1155.5 779.6 L1155.7 765.7 L1156.0 775.1 L1156.2 779.2 L1156.5 782.7 L1156.7 779.9 L1157.0 772.9 L1157.2 772.8 L1157.5 777.6 L1157.7 776.3 L1157.9 778.1 L1158.2 777.7 L1158.4 770.3 L1158.7 774.9 L1158.9 764.7 L1159.2 780.4 L1159.4 777.5 L1159.7 772.5 L1159.9 778.1 L1160.1 783.7 L1160.4 781.6 L1160.6 776.5 L1160.9 775.4 L1161.1 777.5 L1161.4 772.2 L1161.6 772.3 L1161.9 775.6 L1162.1 777.1 L1162.3 778.5 L1162.6 774.6 L1162.8 772.9 L1163.1 777.1 L1163.3 775.3 L1163.6 779.1 L1163.8 784.4 L1164.0 782.5 L1164.3 773.9 L1164.5 775.5 L1164.8 782.4 L1165.0 777.5 L1165.3 773.6 L1165.5 771.4 L1165.8 773.1 L1166.0 780.9 L1166.2 778.9 L1166.5 777.4 L1166.7 782.9 L1167.0 775.8 L1167.2 773.2 L1167.5 780.6 L1167.7 768.7 L1168.0 791.8 L1168.2 779.4 L1168.4 779.6 L1168.7 782.0 L1168.9 776.6 L1169.2 778.6 L1169.4 770.6 L1169.7 775.8 L1169.9 776.2 L1170.2 780.0 L1170.4 785.9 L1170.6 779.5 L1170.9 783.2 L1171.1 774.5 L1171.4 779.4 L1171.6 771.2 L1171.9 775.8 L1172.1 775.4 L1172.4 778.4 L1172.6 778.6 L1172.8 776.5 L1173.1 775.2 L1173.3 783.3 L1173.6 777.5 L1173.8 686.0 L1174.1 780.5 L1174.3 781.4 L1174.5 783.6 L1174.8 787.3 L1175.0 774.6 L1175.3 742.7 L1175.5 779.1 L1175.8 771.6 L1176.0 768.5 L1176.3 785.1 L1176.5 775.7 L1176.7 777.9 L1177.0 779.1 L1177.2 778.8 L1177.5 781.3 L1177.7 773.7 L1178.0 778.4 L1178.2 779.8 L1178.5 775.5 L1178.7 777.3 L1178.9 779.5 L1179.2 787.3 L1179.4 773.4 L1179.7 762.6 L1179.9 782.6 L1180.2 786.4 L1180.4 795.2 L1180.7 787.6 L1180.9 782.0 L1181.1 781.4 L1181.4 792.8 L1181.6 782.4 L1181.9 779.8" fill="none" stroke="#0000ff" stroke-width="1.5" stroke-linejoin="round"/></svg>
<rect x="911" y="689" width="274" height="120" fill="none" stroke="#000" stroke-width="1.5" stroke-linejoin="miter"/>
<line x1="913.5" y1="809" x2="913.5" y2="815.5" stroke="#000" stroke-width="1.5"/>
<text x="910.65" y="831.5" font-size="10.1" textLength="5.7" lengthAdjust="spacingAndGlyphs" fill="#000">0</text>
<line x1="962.34" y1="809" x2="962.34" y2="815.5" stroke="#000" stroke-width="1.5"/>
<text x="953.19" y="831.5" font-size="10.1" textLength="18.17" lengthAdjust="spacingAndGlyphs" fill="#000">200</text>
<line x1="1011.18" y1="809" x2="1011.18" y2="815.5" stroke="#000" stroke-width="1.5"/>
<text x="1002.21" y="831.5" font-size="10.1" textLength="18.11" lengthAdjust="spacingAndGlyphs" fill="#000">400</text>
<line x1="1060.02" y1="809" x2="1060.02" y2="815.5" stroke="#000" stroke-width="1.5"/>
<text x="1050.85" y="831.5" font-size="10.1" textLength="18.21" lengthAdjust="spacingAndGlyphs" fill="#000">600</text>
<line x1="1108.86" y1="809" x2="1108.86" y2="815.5" stroke="#000" stroke-width="1.5"/>
<text x="1099.76" y="831.5" font-size="10.1" textLength="18.14" lengthAdjust="spacingAndGlyphs" fill="#000">800</text>
<line x1="1157.7" y1="809" x2="1157.7" y2="815.5" stroke="#000" stroke-width="1.5"/>
<text x="1145.36" y="831.5" font-size="10.1" textLength="24.28" lengthAdjust="spacingAndGlyphs" fill="#000">1000</text>
<line x1="911" y1="796.3" x2="904.5" y2="796.3" stroke="#000" stroke-width="1.5"/>
<text x="877.34" y="799.9" font-size="10.1" textLength="18.09" lengthAdjust="spacingAndGlyphs" fill="#000">100</text>
<line x1="911" y1="771.95" x2="904.5" y2="771.95" stroke="#000" stroke-width="1.5"/>
<text x="877.34" y="775.55" font-size="10.1" textLength="18.09" lengthAdjust="spacingAndGlyphs" fill="#000">150</text>
<line x1="911" y1="747.6" x2="904.5" y2="747.6" stroke="#000" stroke-width="1.5"/>
<text x="877.26" y="751.2" font-size="10.1" textLength="18.17" lengthAdjust="spacingAndGlyphs" fill="#000">200</text>
<line x1="911" y1="723.25" x2="904.5" y2="723.25" stroke="#000" stroke-width="1.5"/>
<text x="877.26" y="726.85" font-size="10.1" textLength="18.17" lengthAdjust="spacingAndGlyphs" fill="#000">250</text>
<line x1="911" y1="698.9" x2="904.5" y2="698.9" stroke="#000" stroke-width="1.5"/>
<text x="877.42" y="702.5" font-size="10.1" textLength="18" lengthAdjust="spacingAndGlyphs" fill="#000">300</text>
<text x="1044.58" y="849.5" font-size="10.4" textLength="6.84" lengthAdjust="spacingAndGlyphs" fill="#000">Y</text>
<text transform="translate(866 749.7) rotate(-90)" x="-17.34" y="0" font-size="10.4" textLength="34.6" lengthAdjust="spacingAndGlyphs" fill="#000">counts</text>
<text transform="translate(1194.3 747.5) rotate(90)" x="-19.39" y="0" font-size="10.4" textLength="38.29" lengthAdjust="spacingAndGlyphs" fill="#000">cut in y</text>
<rect x="1108.8" y="691.8" width="73.6" height="16.4" rx="2" ry="2" fill="#fff" fill-opacity="0.8" stroke="#cccccc" stroke-width="1"/>
<line x1="1111.1" y1="700" x2="1134" y2="700" stroke="#0000ff" stroke-width="1.5"/>
<text x="1137.26" y="703" font-size="10.4" textLength="39.79" lengthAdjust="spacingAndGlyphs" fill="#000">x=1024</text></svg>
</body></html>
